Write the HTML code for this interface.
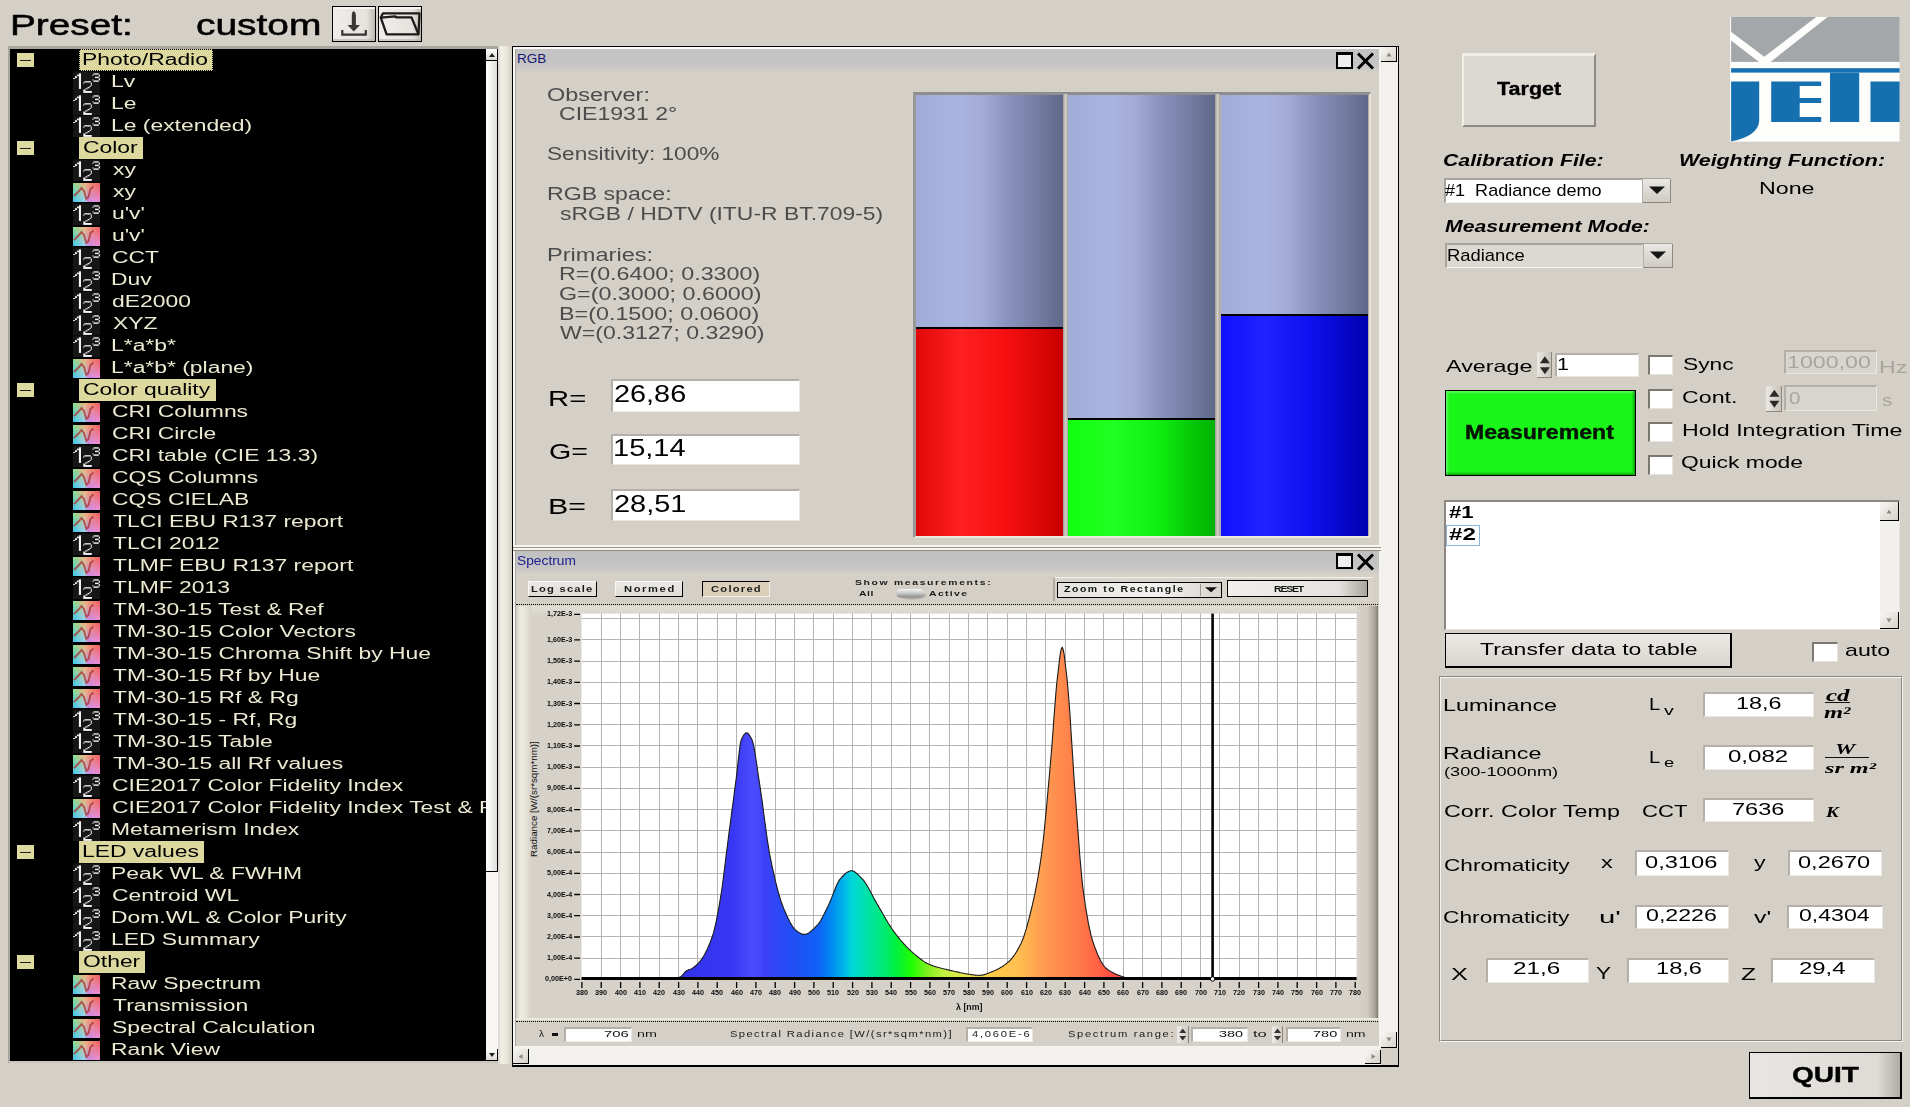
<!DOCTYPE html>
<html><head><meta charset="utf-8"><style>
html,body{margin:0;padding:0;}
body{width:1910px;height:1107px;position:relative;overflow:hidden;background:#d4d0c8;font-family:"Liberation Sans",sans-serif;}
.b{position:absolute;box-sizing:border-box;}
.t{position:absolute;white-space:pre;line-height:1;transform-origin:0 0;font-family:"Liberation Sans",sans-serif;}
.tb{font-weight:bold;}
.tbi{font-weight:bold;font-style:italic;}
.ti{font-style:italic;}
.tsi{font-family:"Liberation Serif",serif;font-style:italic;}
.tsbi{font-family:"Liberation Serif",serif;font-style:italic;font-weight:bold;}
svg{position:absolute;}
</style></head><body>
<div class="t tr" style="left:10.4px;top:10.1px;font-size:30px;transform:scaleX(1.2922);color:#000;-webkit-text-stroke:0.55px #000;">Preset:</div>
<div class="t tr" style="left:196.44px;top:10.1px;font-size:30px;transform:scaleX(1.2970);color:#000;-webkit-text-stroke:0.55px #000;">custom</div>
<div class="b" style="left:332px;top:6px;width:44px;height:36px;border:1px solid #000;background:linear-gradient(90deg,#efedea 0%,#e6e3de 80%,#bdb9b2 100%);"></div>
<div class="b" style="left:333px;top:7px;width:42px;height:2px;background:#f6f5f2;"></div>
<div class="b" style="left:333px;top:39px;width:42px;height:2px;background:#b8b4ac;opacity:.6"></div>
<div class="b" style="left:378px;top:6px;width:43.5px;height:36px;border:1px solid #000;background:linear-gradient(90deg,#efedea 0%,#e6e3de 80%,#bdb9b2 100%);"></div>
<div class="b" style="left:379px;top:7px;width:41.5px;height:2px;background:#f6f5f2;"></div>
<div class="b" style="left:379px;top:39px;width:41.5px;height:2px;background:#b8b4ac;opacity:.6"></div>
<svg style="left:332px;top:6px" width="44" height="36" viewBox="0 0 44 36"><path d="M21.5 5 Q19.8 6 19.8 9 L19.8 19 L15.5 19 L21.8 25.5 L28 19 L23.9 19 L23.9 9 Q23.9 6 21.5 5Z" fill="#3a3636"/><path d="M10.3 24 L10.3 28.7 L33.8 28.7 L33.8 24" fill="none" stroke="#383232" stroke-width="2.2"/></svg>
<svg style="left:378px;top:6px" width="44" height="36" viewBox="0 0 44 36"><path d="M2.8 11.6 L5 7.3 L41.5 7.3 L40.5 28.3 L8.6 28.3 Z" fill="none" stroke="#1e1a1a" stroke-width="2.3" stroke-linejoin="round"/><path d="M2.8 11.6 L17.3 10.4 L18.3 11.4 L33.5 11.4 L40.5 28.3" fill="none" stroke="#1e1a1a" stroke-width="2.3" stroke-linejoin="round"/></svg>
<div class="b" style="left:7.6px;top:46.3px;width:490.7px;height:1016.9px;background:#a8a49e;"></div>
<div class="b" style="left:8.6px;top:1061px;width:489.7px;height:2.2px;background:#c9c5bd;"></div>
<div class="b" style="left:10px;top:49px;width:476px;height:1012px;background:#000;"></div>
<div class="b" style="left:498.3px;top:46px;width:13.2px;height:1017.5px;background:linear-gradient(90deg,#d8d4cc 0%,#f1eee4 25%,#ebe8de 60%,#d6d2ca 100%);"></div>
<div class="b" style="left:486px;top:49px;width:11.6px;height:1012px;background:#f7f6f4;"></div>
<div class="b" style="left:486px;top:49px;width:11.6px;height:11.5px;background:linear-gradient(180deg,#fbfbfa,#dcdad6);border-right:1px solid #000;border-bottom:1px solid #000;"></div>
<svg style="left:487.8px;top:51.75px" width="8" height="6"><path d="M4 1 L7 5 L1 5Z" fill="#222"/></svg>
<div class="b" style="left:486px;top:60.5px;width:11.6px;height:811px;background:linear-gradient(90deg,#ffffff 0%,#f4f4f3 40%,#dedcd9 100%);border-right:1.5px solid #000;border-bottom:1.5px solid #000;"></div>
<div class="b" style="left:486px;top:1049px;width:11.6px;height:12px;background:linear-gradient(180deg,#fbfbfa,#dcdad6);border-right:1px solid #000;border-bottom:1px solid #000;"></div>
<svg style="left:487.8px;top:1052px" width="8" height="6"><path d="M1 1 L7 1 L4 5Z" fill="#222"/></svg>
<div style="position:absolute;left:10px;top:49px;width:476px;height:1012px;overflow:hidden">
<div class="b" style="left:7.1px;top:4px;width:16.9px;height:14px;background:#dedaa0;"></div>
<div class="b" style="left:10.3px;top:10.5px;width:11px;height:1.1px;background:#222;"></div>
<div class="b" style="left:69px;top:0px;width:133.71px;height:22px;background:#dcd89e;outline:1px dotted #000;outline-offset:-1px;"></div>
<div class="t tr" style="left:72.17px;top:3px;font-size:16px;transform:scaleX(1.4300);color:#000;">Photo/Radio</div>
<svg style="left:63px;top:22px" width="28" height="23" viewBox="0 0 28 23"><rect x="0" y="0.5" width="27" height="21.5" fill="#161616"/><g fill="#f4f4f4"><rect x="5.9" y="2.3" width="2.1" height="15.6"/><rect x="0.1" y="7.1" width="1.9" height="0.9"/><rect x="2.0" y="5.2" width="1.9" height="1.9"/><rect x="3.9" y="3.6" width="2.0" height="1.6"/><rect x="10.3" y="11.3" width="1.0" height="1.4"/><rect x="11.3" y="10.2" width="6.5" height="1.3"/><rect x="17.8" y="11.5" width="1.0" height="3.3"/><rect x="16.5" y="14.8" width="1.3" height="1.2"/><rect x="14.5" y="16.0" width="2.0" height="1.3"/><rect x="12.4" y="17.3" width="2.1" height="1.2"/><rect x="10.3" y="18.5" width="2.1" height="1.5"/><rect x="10.3" y="20.0" width="8.5" height="1.9"/><rect x="20.5" y="2.3" width="5.2" height="1.3"/><rect x="19.4" y="3.6" width="1.1" height="1.2"/><rect x="25.7" y="3.6" width="1.2" height="2.1"/><rect x="22.0" y="5.7" width="3.7" height="1.4"/><rect x="25.7" y="7.1" width="1.2" height="2.3"/><rect x="20.5" y="9.4" width="5.2" height="1.4"/><rect x="19.4" y="8.4" width="1.1" height="1.0"/></g></svg>
<div class="t tr" style="left:101.37px;top:25px;font-size:16px;transform:scaleX(1.4300);color:#ecead2;">Lv</div>
<svg style="left:63px;top:44px" width="28" height="23" viewBox="0 0 28 23"><rect x="0" y="0.5" width="27" height="21.5" fill="#161616"/><g fill="#f4f4f4"><rect x="5.9" y="2.3" width="2.1" height="15.6"/><rect x="0.1" y="7.1" width="1.9" height="0.9"/><rect x="2.0" y="5.2" width="1.9" height="1.9"/><rect x="3.9" y="3.6" width="2.0" height="1.6"/><rect x="10.3" y="11.3" width="1.0" height="1.4"/><rect x="11.3" y="10.2" width="6.5" height="1.3"/><rect x="17.8" y="11.5" width="1.0" height="3.3"/><rect x="16.5" y="14.8" width="1.3" height="1.2"/><rect x="14.5" y="16.0" width="2.0" height="1.3"/><rect x="12.4" y="17.3" width="2.1" height="1.2"/><rect x="10.3" y="18.5" width="2.1" height="1.5"/><rect x="10.3" y="20.0" width="8.5" height="1.9"/><rect x="20.5" y="2.3" width="5.2" height="1.3"/><rect x="19.4" y="3.6" width="1.1" height="1.2"/><rect x="25.7" y="3.6" width="1.2" height="2.1"/><rect x="22.0" y="5.7" width="3.7" height="1.4"/><rect x="25.7" y="7.1" width="1.2" height="2.3"/><rect x="20.5" y="9.4" width="5.2" height="1.4"/><rect x="19.4" y="8.4" width="1.1" height="1.0"/></g></svg>
<div class="t tr" style="left:101.37px;top:47px;font-size:16px;transform:scaleX(1.4300);color:#ecead2;">Le</div>
<svg style="left:63px;top:66px" width="28" height="23" viewBox="0 0 28 23"><rect x="0" y="0.5" width="27" height="21.5" fill="#161616"/><g fill="#f4f4f4"><rect x="5.9" y="2.3" width="2.1" height="15.6"/><rect x="0.1" y="7.1" width="1.9" height="0.9"/><rect x="2.0" y="5.2" width="1.9" height="1.9"/><rect x="3.9" y="3.6" width="2.0" height="1.6"/><rect x="10.3" y="11.3" width="1.0" height="1.4"/><rect x="11.3" y="10.2" width="6.5" height="1.3"/><rect x="17.8" y="11.5" width="1.0" height="3.3"/><rect x="16.5" y="14.8" width="1.3" height="1.2"/><rect x="14.5" y="16.0" width="2.0" height="1.3"/><rect x="12.4" y="17.3" width="2.1" height="1.2"/><rect x="10.3" y="18.5" width="2.1" height="1.5"/><rect x="10.3" y="20.0" width="8.5" height="1.9"/><rect x="20.5" y="2.3" width="5.2" height="1.3"/><rect x="19.4" y="3.6" width="1.1" height="1.2"/><rect x="25.7" y="3.6" width="1.2" height="2.1"/><rect x="22.0" y="5.7" width="3.7" height="1.4"/><rect x="25.7" y="7.1" width="1.2" height="2.3"/><rect x="20.5" y="9.4" width="5.2" height="1.4"/><rect x="19.4" y="8.4" width="1.1" height="1.0"/></g></svg>
<div class="t tr" style="left:101.37px;top:69px;font-size:16px;transform:scaleX(1.4300);color:#ecead2;">Le (extended)</div>
<div class="b" style="left:7.1px;top:92px;width:16.9px;height:14px;background:#dedaa0;"></div>
<div class="b" style="left:10.3px;top:98.5px;width:11px;height:1.1px;background:#222;"></div>
<div class="b" style="left:69px;top:88px;width:63.58px;height:22px;background:#dcd89e;"></div>
<div class="t tr" style="left:72.86px;top:91px;font-size:16px;transform:scaleX(1.4300);color:#000;">Color</div>
<svg style="left:63px;top:110px" width="28" height="23" viewBox="0 0 28 23"><rect x="0" y="0.5" width="27" height="21.5" fill="#161616"/><g fill="#f4f4f4"><rect x="5.9" y="2.3" width="2.1" height="15.6"/><rect x="0.1" y="7.1" width="1.9" height="0.9"/><rect x="2.0" y="5.2" width="1.9" height="1.9"/><rect x="3.9" y="3.6" width="2.0" height="1.6"/><rect x="10.3" y="11.3" width="1.0" height="1.4"/><rect x="11.3" y="10.2" width="6.5" height="1.3"/><rect x="17.8" y="11.5" width="1.0" height="3.3"/><rect x="16.5" y="14.8" width="1.3" height="1.2"/><rect x="14.5" y="16.0" width="2.0" height="1.3"/><rect x="12.4" y="17.3" width="2.1" height="1.2"/><rect x="10.3" y="18.5" width="2.1" height="1.5"/><rect x="10.3" y="20.0" width="8.5" height="1.9"/><rect x="20.5" y="2.3" width="5.2" height="1.3"/><rect x="19.4" y="3.6" width="1.1" height="1.2"/><rect x="25.7" y="3.6" width="1.2" height="2.1"/><rect x="22.0" y="5.7" width="3.7" height="1.4"/><rect x="25.7" y="7.1" width="1.2" height="2.3"/><rect x="20.5" y="9.4" width="5.2" height="1.4"/><rect x="19.4" y="8.4" width="1.1" height="1.0"/></g></svg>
<div class="t tr" style="left:102.97px;top:113px;font-size:16px;transform:scaleX(1.4300);color:#ecead2;">xy</div>
<svg style="left:63px;top:134.2px" width="27" height="19" viewBox="0 0 27 19"><defs><linearGradient id="gA" x1="0" y1="0" x2="1" y2="0"><stop offset="0" stop-color="#86e28c"/><stop offset=".45" stop-color="#f1b07a"/><stop offset="1" stop-color="#ec5a58"/></linearGradient><linearGradient id="gB" x1="0" y1="0" x2="1" y2="0"><stop offset="0" stop-color="#3ec4ee"/><stop offset=".45" stop-color="#9ad8f0"/><stop offset=".55" stop-color="#c888e8"/><stop offset="1" stop-color="#f090d8"/></linearGradient><linearGradient id="gV" x1="0" y1="0" x2="0" y2="1"><stop offset="0" stop-color="#fff" stop-opacity="1"/><stop offset="1" stop-color="#000" stop-opacity="1"/></linearGradient><mask id="mV"><rect width="27" height="19" fill="url(#gV)"/></mask></defs><rect width="27" height="19" fill="url(#gB)"/><rect width="27" height="19" fill="url(#gA)" mask="url(#mV)"/><path d="M1 13 L6 8 L8.5 5 L11 8 L13.3 16 L15.5 14 L17.5 6 L20.5 3.5" stroke="#a83030" stroke-width="1.9" fill="none" opacity=".75"/></svg>
<div class="t tr" style="left:102.97px;top:135px;font-size:16px;transform:scaleX(1.4300);color:#ecead2;">xy</div>
<svg style="left:63px;top:154px" width="28" height="23" viewBox="0 0 28 23"><rect x="0" y="0.5" width="27" height="21.5" fill="#161616"/><g fill="#f4f4f4"><rect x="5.9" y="2.3" width="2.1" height="15.6"/><rect x="0.1" y="7.1" width="1.9" height="0.9"/><rect x="2.0" y="5.2" width="1.9" height="1.9"/><rect x="3.9" y="3.6" width="2.0" height="1.6"/><rect x="10.3" y="11.3" width="1.0" height="1.4"/><rect x="11.3" y="10.2" width="6.5" height="1.3"/><rect x="17.8" y="11.5" width="1.0" height="3.3"/><rect x="16.5" y="14.8" width="1.3" height="1.2"/><rect x="14.5" y="16.0" width="2.0" height="1.3"/><rect x="12.4" y="17.3" width="2.1" height="1.2"/><rect x="10.3" y="18.5" width="2.1" height="1.5"/><rect x="10.3" y="20.0" width="8.5" height="1.9"/><rect x="20.5" y="2.3" width="5.2" height="1.3"/><rect x="19.4" y="3.6" width="1.1" height="1.2"/><rect x="25.7" y="3.6" width="1.2" height="2.1"/><rect x="22.0" y="5.7" width="3.7" height="1.4"/><rect x="25.7" y="7.1" width="1.2" height="2.3"/><rect x="20.5" y="9.4" width="5.2" height="1.4"/><rect x="19.4" y="8.4" width="1.1" height="1.0"/></g></svg>
<div class="t tr" style="left:101.71px;top:157px;font-size:16px;transform:scaleX(1.4300);color:#ecead2;">u'v'</div>
<svg style="left:63px;top:178.2px" width="27" height="19" viewBox="0 0 27 19"><defs><linearGradient id="gA" x1="0" y1="0" x2="1" y2="0"><stop offset="0" stop-color="#86e28c"/><stop offset=".45" stop-color="#f1b07a"/><stop offset="1" stop-color="#ec5a58"/></linearGradient><linearGradient id="gB" x1="0" y1="0" x2="1" y2="0"><stop offset="0" stop-color="#3ec4ee"/><stop offset=".45" stop-color="#9ad8f0"/><stop offset=".55" stop-color="#c888e8"/><stop offset="1" stop-color="#f090d8"/></linearGradient><linearGradient id="gV" x1="0" y1="0" x2="0" y2="1"><stop offset="0" stop-color="#fff" stop-opacity="1"/><stop offset="1" stop-color="#000" stop-opacity="1"/></linearGradient><mask id="mV"><rect width="27" height="19" fill="url(#gV)"/></mask></defs><rect width="27" height="19" fill="url(#gB)"/><rect width="27" height="19" fill="url(#gA)" mask="url(#mV)"/><path d="M1 13 L6 8 L8.5 5 L11 8 L13.3 16 L15.5 14 L17.5 6 L20.5 3.5" stroke="#a83030" stroke-width="1.9" fill="none" opacity=".75"/></svg>
<div class="t tr" style="left:101.71px;top:179px;font-size:16px;transform:scaleX(1.4300);color:#ecead2;">u'v'</div>
<svg style="left:63px;top:198px" width="28" height="23" viewBox="0 0 28 23"><rect x="0" y="0.5" width="27" height="21.5" fill="#161616"/><g fill="#f4f4f4"><rect x="5.9" y="2.3" width="2.1" height="15.6"/><rect x="0.1" y="7.1" width="1.9" height="0.9"/><rect x="2.0" y="5.2" width="1.9" height="1.9"/><rect x="3.9" y="3.6" width="2.0" height="1.6"/><rect x="10.3" y="11.3" width="1.0" height="1.4"/><rect x="11.3" y="10.2" width="6.5" height="1.3"/><rect x="17.8" y="11.5" width="1.0" height="3.3"/><rect x="16.5" y="14.8" width="1.3" height="1.2"/><rect x="14.5" y="16.0" width="2.0" height="1.3"/><rect x="12.4" y="17.3" width="2.1" height="1.2"/><rect x="10.3" y="18.5" width="2.1" height="1.5"/><rect x="10.3" y="20.0" width="8.5" height="1.9"/><rect x="20.5" y="2.3" width="5.2" height="1.3"/><rect x="19.4" y="3.6" width="1.1" height="1.2"/><rect x="25.7" y="3.6" width="1.2" height="2.1"/><rect x="22.0" y="5.7" width="3.7" height="1.4"/><rect x="25.7" y="7.1" width="1.2" height="2.3"/><rect x="20.5" y="9.4" width="5.2" height="1.4"/><rect x="19.4" y="8.4" width="1.1" height="1.0"/></g></svg>
<div class="t tr" style="left:102.06px;top:201px;font-size:16px;transform:scaleX(1.4300);color:#ecead2;">CCT</div>
<svg style="left:63px;top:220px" width="28" height="23" viewBox="0 0 28 23"><rect x="0" y="0.5" width="27" height="21.5" fill="#161616"/><g fill="#f4f4f4"><rect x="5.9" y="2.3" width="2.1" height="15.6"/><rect x="0.1" y="7.1" width="1.9" height="0.9"/><rect x="2.0" y="5.2" width="1.9" height="1.9"/><rect x="3.9" y="3.6" width="2.0" height="1.6"/><rect x="10.3" y="11.3" width="1.0" height="1.4"/><rect x="11.3" y="10.2" width="6.5" height="1.3"/><rect x="17.8" y="11.5" width="1.0" height="3.3"/><rect x="16.5" y="14.8" width="1.3" height="1.2"/><rect x="14.5" y="16.0" width="2.0" height="1.3"/><rect x="12.4" y="17.3" width="2.1" height="1.2"/><rect x="10.3" y="18.5" width="2.1" height="1.5"/><rect x="10.3" y="20.0" width="8.5" height="1.9"/><rect x="20.5" y="2.3" width="5.2" height="1.3"/><rect x="19.4" y="3.6" width="1.1" height="1.2"/><rect x="25.7" y="3.6" width="1.2" height="2.1"/><rect x="22.0" y="5.7" width="3.7" height="1.4"/><rect x="25.7" y="7.1" width="1.2" height="2.3"/><rect x="20.5" y="9.4" width="5.2" height="1.4"/><rect x="19.4" y="8.4" width="1.1" height="1.0"/></g></svg>
<div class="t tr" style="left:101.37px;top:223px;font-size:16px;transform:scaleX(1.4300);color:#ecead2;">Duv</div>
<svg style="left:63px;top:242px" width="28" height="23" viewBox="0 0 28 23"><rect x="0" y="0.5" width="27" height="21.5" fill="#161616"/><g fill="#f4f4f4"><rect x="5.9" y="2.3" width="2.1" height="15.6"/><rect x="0.1" y="7.1" width="1.9" height="0.9"/><rect x="2.0" y="5.2" width="1.9" height="1.9"/><rect x="3.9" y="3.6" width="2.0" height="1.6"/><rect x="10.3" y="11.3" width="1.0" height="1.4"/><rect x="11.3" y="10.2" width="6.5" height="1.3"/><rect x="17.8" y="11.5" width="1.0" height="3.3"/><rect x="16.5" y="14.8" width="1.3" height="1.2"/><rect x="14.5" y="16.0" width="2.0" height="1.3"/><rect x="12.4" y="17.3" width="2.1" height="1.2"/><rect x="10.3" y="18.5" width="2.1" height="1.5"/><rect x="10.3" y="20.0" width="8.5" height="1.9"/><rect x="20.5" y="2.3" width="5.2" height="1.3"/><rect x="19.4" y="3.6" width="1.1" height="1.2"/><rect x="25.7" y="3.6" width="1.2" height="2.1"/><rect x="22.0" y="5.7" width="3.7" height="1.4"/><rect x="25.7" y="7.1" width="1.2" height="2.3"/><rect x="20.5" y="9.4" width="5.2" height="1.4"/><rect x="19.4" y="8.4" width="1.1" height="1.0"/></g></svg>
<div class="t tr" style="left:102.28px;top:245px;font-size:16px;transform:scaleX(1.4300);color:#ecead2;">dE2000</div>
<svg style="left:63px;top:264px" width="28" height="23" viewBox="0 0 28 23"><rect x="0" y="0.5" width="27" height="21.5" fill="#161616"/><g fill="#f4f4f4"><rect x="5.9" y="2.3" width="2.1" height="15.6"/><rect x="0.1" y="7.1" width="1.9" height="0.9"/><rect x="2.0" y="5.2" width="1.9" height="1.9"/><rect x="3.9" y="3.6" width="2.0" height="1.6"/><rect x="10.3" y="11.3" width="1.0" height="1.4"/><rect x="11.3" y="10.2" width="6.5" height="1.3"/><rect x="17.8" y="11.5" width="1.0" height="3.3"/><rect x="16.5" y="14.8" width="1.3" height="1.2"/><rect x="14.5" y="16.0" width="2.0" height="1.3"/><rect x="12.4" y="17.3" width="2.1" height="1.2"/><rect x="10.3" y="18.5" width="2.1" height="1.5"/><rect x="10.3" y="20.0" width="8.5" height="1.9"/><rect x="20.5" y="2.3" width="5.2" height="1.3"/><rect x="19.4" y="3.6" width="1.1" height="1.2"/><rect x="25.7" y="3.6" width="1.2" height="2.1"/><rect x="22.0" y="5.7" width="3.7" height="1.4"/><rect x="25.7" y="7.1" width="1.2" height="2.3"/><rect x="20.5" y="9.4" width="5.2" height="1.4"/><rect x="19.4" y="8.4" width="1.1" height="1.0"/></g></svg>
<div class="t tr" style="left:102.63px;top:267px;font-size:16px;transform:scaleX(1.4300);color:#ecead2;">XYZ</div>
<svg style="left:63px;top:286px" width="28" height="23" viewBox="0 0 28 23"><rect x="0" y="0.5" width="27" height="21.5" fill="#161616"/><g fill="#f4f4f4"><rect x="5.9" y="2.3" width="2.1" height="15.6"/><rect x="0.1" y="7.1" width="1.9" height="0.9"/><rect x="2.0" y="5.2" width="1.9" height="1.9"/><rect x="3.9" y="3.6" width="2.0" height="1.6"/><rect x="10.3" y="11.3" width="1.0" height="1.4"/><rect x="11.3" y="10.2" width="6.5" height="1.3"/><rect x="17.8" y="11.5" width="1.0" height="3.3"/><rect x="16.5" y="14.8" width="1.3" height="1.2"/><rect x="14.5" y="16.0" width="2.0" height="1.3"/><rect x="12.4" y="17.3" width="2.1" height="1.2"/><rect x="10.3" y="18.5" width="2.1" height="1.5"/><rect x="10.3" y="20.0" width="8.5" height="1.9"/><rect x="20.5" y="2.3" width="5.2" height="1.3"/><rect x="19.4" y="3.6" width="1.1" height="1.2"/><rect x="25.7" y="3.6" width="1.2" height="2.1"/><rect x="22.0" y="5.7" width="3.7" height="1.4"/><rect x="25.7" y="7.1" width="1.2" height="2.3"/><rect x="20.5" y="9.4" width="5.2" height="1.4"/><rect x="19.4" y="8.4" width="1.1" height="1.0"/></g></svg>
<div class="t tr" style="left:101.37px;top:289px;font-size:16px;transform:scaleX(1.4300);color:#ecead2;">L*a*b*</div>
<svg style="left:63px;top:310.2px" width="27" height="19" viewBox="0 0 27 19"><defs><linearGradient id="gA" x1="0" y1="0" x2="1" y2="0"><stop offset="0" stop-color="#86e28c"/><stop offset=".45" stop-color="#f1b07a"/><stop offset="1" stop-color="#ec5a58"/></linearGradient><linearGradient id="gB" x1="0" y1="0" x2="1" y2="0"><stop offset="0" stop-color="#3ec4ee"/><stop offset=".45" stop-color="#9ad8f0"/><stop offset=".55" stop-color="#c888e8"/><stop offset="1" stop-color="#f090d8"/></linearGradient><linearGradient id="gV" x1="0" y1="0" x2="0" y2="1"><stop offset="0" stop-color="#fff" stop-opacity="1"/><stop offset="1" stop-color="#000" stop-opacity="1"/></linearGradient><mask id="mV"><rect width="27" height="19" fill="url(#gV)"/></mask></defs><rect width="27" height="19" fill="url(#gB)"/><rect width="27" height="19" fill="url(#gA)" mask="url(#mV)"/><path d="M1 13 L6 8 L8.5 5 L11 8 L13.3 16 L15.5 14 L17.5 6 L20.5 3.5" stroke="#a83030" stroke-width="1.9" fill="none" opacity=".75"/></svg>
<div class="t tr" style="left:101.37px;top:311px;font-size:16px;transform:scaleX(1.4300);color:#ecead2;">L*a*b* (plane)</div>
<div class="b" style="left:7.1px;top:334px;width:16.9px;height:14px;background:#dedaa0;"></div>
<div class="b" style="left:10.3px;top:340.5px;width:11px;height:1.1px;background:#222;"></div>
<div class="b" style="left:69px;top:330px;width:136.57px;height:22px;background:#dcd89e;"></div>
<div class="t tr" style="left:72.86px;top:333px;font-size:16px;transform:scaleX(1.4300);color:#000;">Color quality</div>
<svg style="left:63px;top:354.2px" width="27" height="19" viewBox="0 0 27 19"><defs><linearGradient id="gA" x1="0" y1="0" x2="1" y2="0"><stop offset="0" stop-color="#86e28c"/><stop offset=".45" stop-color="#f1b07a"/><stop offset="1" stop-color="#ec5a58"/></linearGradient><linearGradient id="gB" x1="0" y1="0" x2="1" y2="0"><stop offset="0" stop-color="#3ec4ee"/><stop offset=".45" stop-color="#9ad8f0"/><stop offset=".55" stop-color="#c888e8"/><stop offset="1" stop-color="#f090d8"/></linearGradient><linearGradient id="gV" x1="0" y1="0" x2="0" y2="1"><stop offset="0" stop-color="#fff" stop-opacity="1"/><stop offset="1" stop-color="#000" stop-opacity="1"/></linearGradient><mask id="mV"><rect width="27" height="19" fill="url(#gV)"/></mask></defs><rect width="27" height="19" fill="url(#gB)"/><rect width="27" height="19" fill="url(#gA)" mask="url(#mV)"/><path d="M1 13 L6 8 L8.5 5 L11 8 L13.3 16 L15.5 14 L17.5 6 L20.5 3.5" stroke="#a83030" stroke-width="1.9" fill="none" opacity=".75"/></svg>
<div class="t tr" style="left:102.06px;top:355px;font-size:16px;transform:scaleX(1.4300);color:#ecead2;">CRI Columns</div>
<svg style="left:63px;top:376.2px" width="27" height="19" viewBox="0 0 27 19"><defs><linearGradient id="gA" x1="0" y1="0" x2="1" y2="0"><stop offset="0" stop-color="#86e28c"/><stop offset=".45" stop-color="#f1b07a"/><stop offset="1" stop-color="#ec5a58"/></linearGradient><linearGradient id="gB" x1="0" y1="0" x2="1" y2="0"><stop offset="0" stop-color="#3ec4ee"/><stop offset=".45" stop-color="#9ad8f0"/><stop offset=".55" stop-color="#c888e8"/><stop offset="1" stop-color="#f090d8"/></linearGradient><linearGradient id="gV" x1="0" y1="0" x2="0" y2="1"><stop offset="0" stop-color="#fff" stop-opacity="1"/><stop offset="1" stop-color="#000" stop-opacity="1"/></linearGradient><mask id="mV"><rect width="27" height="19" fill="url(#gV)"/></mask></defs><rect width="27" height="19" fill="url(#gB)"/><rect width="27" height="19" fill="url(#gA)" mask="url(#mV)"/><path d="M1 13 L6 8 L8.5 5 L11 8 L13.3 16 L15.5 14 L17.5 6 L20.5 3.5" stroke="#a83030" stroke-width="1.9" fill="none" opacity=".75"/></svg>
<div class="t tr" style="left:102.06px;top:377px;font-size:16px;transform:scaleX(1.4300);color:#ecead2;">CRI Circle</div>
<svg style="left:63px;top:396px" width="28" height="23" viewBox="0 0 28 23"><rect x="0" y="0.5" width="27" height="21.5" fill="#161616"/><g fill="#f4f4f4"><rect x="5.9" y="2.3" width="2.1" height="15.6"/><rect x="0.1" y="7.1" width="1.9" height="0.9"/><rect x="2.0" y="5.2" width="1.9" height="1.9"/><rect x="3.9" y="3.6" width="2.0" height="1.6"/><rect x="10.3" y="11.3" width="1.0" height="1.4"/><rect x="11.3" y="10.2" width="6.5" height="1.3"/><rect x="17.8" y="11.5" width="1.0" height="3.3"/><rect x="16.5" y="14.8" width="1.3" height="1.2"/><rect x="14.5" y="16.0" width="2.0" height="1.3"/><rect x="12.4" y="17.3" width="2.1" height="1.2"/><rect x="10.3" y="18.5" width="2.1" height="1.5"/><rect x="10.3" y="20.0" width="8.5" height="1.9"/><rect x="20.5" y="2.3" width="5.2" height="1.3"/><rect x="19.4" y="3.6" width="1.1" height="1.2"/><rect x="25.7" y="3.6" width="1.2" height="2.1"/><rect x="22.0" y="5.7" width="3.7" height="1.4"/><rect x="25.7" y="7.1" width="1.2" height="2.3"/><rect x="20.5" y="9.4" width="5.2" height="1.4"/><rect x="19.4" y="8.4" width="1.1" height="1.0"/></g></svg>
<div class="t tr" style="left:102.06px;top:399px;font-size:16px;transform:scaleX(1.4300);color:#ecead2;">CRI table (CIE 13.3)</div>
<svg style="left:63px;top:420.2px" width="27" height="19" viewBox="0 0 27 19"><defs><linearGradient id="gA" x1="0" y1="0" x2="1" y2="0"><stop offset="0" stop-color="#86e28c"/><stop offset=".45" stop-color="#f1b07a"/><stop offset="1" stop-color="#ec5a58"/></linearGradient><linearGradient id="gB" x1="0" y1="0" x2="1" y2="0"><stop offset="0" stop-color="#3ec4ee"/><stop offset=".45" stop-color="#9ad8f0"/><stop offset=".55" stop-color="#c888e8"/><stop offset="1" stop-color="#f090d8"/></linearGradient><linearGradient id="gV" x1="0" y1="0" x2="0" y2="1"><stop offset="0" stop-color="#fff" stop-opacity="1"/><stop offset="1" stop-color="#000" stop-opacity="1"/></linearGradient><mask id="mV"><rect width="27" height="19" fill="url(#gV)"/></mask></defs><rect width="27" height="19" fill="url(#gB)"/><rect width="27" height="19" fill="url(#gA)" mask="url(#mV)"/><path d="M1 13 L6 8 L8.5 5 L11 8 L13.3 16 L15.5 14 L17.5 6 L20.5 3.5" stroke="#a83030" stroke-width="1.9" fill="none" opacity=".75"/></svg>
<div class="t tr" style="left:102.06px;top:421px;font-size:16px;transform:scaleX(1.4300);color:#ecead2;">CQS Columns</div>
<svg style="left:63px;top:442.2px" width="27" height="19" viewBox="0 0 27 19"><defs><linearGradient id="gA" x1="0" y1="0" x2="1" y2="0"><stop offset="0" stop-color="#86e28c"/><stop offset=".45" stop-color="#f1b07a"/><stop offset="1" stop-color="#ec5a58"/></linearGradient><linearGradient id="gB" x1="0" y1="0" x2="1" y2="0"><stop offset="0" stop-color="#3ec4ee"/><stop offset=".45" stop-color="#9ad8f0"/><stop offset=".55" stop-color="#c888e8"/><stop offset="1" stop-color="#f090d8"/></linearGradient><linearGradient id="gV" x1="0" y1="0" x2="0" y2="1"><stop offset="0" stop-color="#fff" stop-opacity="1"/><stop offset="1" stop-color="#000" stop-opacity="1"/></linearGradient><mask id="mV"><rect width="27" height="19" fill="url(#gV)"/></mask></defs><rect width="27" height="19" fill="url(#gB)"/><rect width="27" height="19" fill="url(#gA)" mask="url(#mV)"/><path d="M1 13 L6 8 L8.5 5 L11 8 L13.3 16 L15.5 14 L17.5 6 L20.5 3.5" stroke="#a83030" stroke-width="1.9" fill="none" opacity=".75"/></svg>
<div class="t tr" style="left:102.06px;top:443px;font-size:16px;transform:scaleX(1.4300);color:#ecead2;">CQS CIELAB</div>
<svg style="left:63px;top:464.2px" width="27" height="19" viewBox="0 0 27 19"><defs><linearGradient id="gA" x1="0" y1="0" x2="1" y2="0"><stop offset="0" stop-color="#86e28c"/><stop offset=".45" stop-color="#f1b07a"/><stop offset="1" stop-color="#ec5a58"/></linearGradient><linearGradient id="gB" x1="0" y1="0" x2="1" y2="0"><stop offset="0" stop-color="#3ec4ee"/><stop offset=".45" stop-color="#9ad8f0"/><stop offset=".55" stop-color="#c888e8"/><stop offset="1" stop-color="#f090d8"/></linearGradient><linearGradient id="gV" x1="0" y1="0" x2="0" y2="1"><stop offset="0" stop-color="#fff" stop-opacity="1"/><stop offset="1" stop-color="#000" stop-opacity="1"/></linearGradient><mask id="mV"><rect width="27" height="19" fill="url(#gV)"/></mask></defs><rect width="27" height="19" fill="url(#gB)"/><rect width="27" height="19" fill="url(#gA)" mask="url(#mV)"/><path d="M1 13 L6 8 L8.5 5 L11 8 L13.3 16 L15.5 14 L17.5 6 L20.5 3.5" stroke="#a83030" stroke-width="1.9" fill="none" opacity=".75"/></svg>
<div class="t tr" style="left:102.74px;top:465px;font-size:16px;transform:scaleX(1.4300);color:#ecead2;">TLCI EBU R137 report</div>
<svg style="left:63px;top:484px" width="28" height="23" viewBox="0 0 28 23"><rect x="0" y="0.5" width="27" height="21.5" fill="#161616"/><g fill="#f4f4f4"><rect x="5.9" y="2.3" width="2.1" height="15.6"/><rect x="0.1" y="7.1" width="1.9" height="0.9"/><rect x="2.0" y="5.2" width="1.9" height="1.9"/><rect x="3.9" y="3.6" width="2.0" height="1.6"/><rect x="10.3" y="11.3" width="1.0" height="1.4"/><rect x="11.3" y="10.2" width="6.5" height="1.3"/><rect x="17.8" y="11.5" width="1.0" height="3.3"/><rect x="16.5" y="14.8" width="1.3" height="1.2"/><rect x="14.5" y="16.0" width="2.0" height="1.3"/><rect x="12.4" y="17.3" width="2.1" height="1.2"/><rect x="10.3" y="18.5" width="2.1" height="1.5"/><rect x="10.3" y="20.0" width="8.5" height="1.9"/><rect x="20.5" y="2.3" width="5.2" height="1.3"/><rect x="19.4" y="3.6" width="1.1" height="1.2"/><rect x="25.7" y="3.6" width="1.2" height="2.1"/><rect x="22.0" y="5.7" width="3.7" height="1.4"/><rect x="25.7" y="7.1" width="1.2" height="2.3"/><rect x="20.5" y="9.4" width="5.2" height="1.4"/><rect x="19.4" y="8.4" width="1.1" height="1.0"/></g></svg>
<div class="t tr" style="left:102.74px;top:487px;font-size:16px;transform:scaleX(1.4300);color:#ecead2;">TLCI 2012</div>
<svg style="left:63px;top:508.2px" width="27" height="19" viewBox="0 0 27 19"><defs><linearGradient id="gA" x1="0" y1="0" x2="1" y2="0"><stop offset="0" stop-color="#86e28c"/><stop offset=".45" stop-color="#f1b07a"/><stop offset="1" stop-color="#ec5a58"/></linearGradient><linearGradient id="gB" x1="0" y1="0" x2="1" y2="0"><stop offset="0" stop-color="#3ec4ee"/><stop offset=".45" stop-color="#9ad8f0"/><stop offset=".55" stop-color="#c888e8"/><stop offset="1" stop-color="#f090d8"/></linearGradient><linearGradient id="gV" x1="0" y1="0" x2="0" y2="1"><stop offset="0" stop-color="#fff" stop-opacity="1"/><stop offset="1" stop-color="#000" stop-opacity="1"/></linearGradient><mask id="mV"><rect width="27" height="19" fill="url(#gV)"/></mask></defs><rect width="27" height="19" fill="url(#gB)"/><rect width="27" height="19" fill="url(#gA)" mask="url(#mV)"/><path d="M1 13 L6 8 L8.5 5 L11 8 L13.3 16 L15.5 14 L17.5 6 L20.5 3.5" stroke="#a83030" stroke-width="1.9" fill="none" opacity=".75"/></svg>
<div class="t tr" style="left:102.74px;top:509px;font-size:16px;transform:scaleX(1.4300);color:#ecead2;">TLMF EBU R137 report</div>
<svg style="left:63px;top:528px" width="28" height="23" viewBox="0 0 28 23"><rect x="0" y="0.5" width="27" height="21.5" fill="#161616"/><g fill="#f4f4f4"><rect x="5.9" y="2.3" width="2.1" height="15.6"/><rect x="0.1" y="7.1" width="1.9" height="0.9"/><rect x="2.0" y="5.2" width="1.9" height="1.9"/><rect x="3.9" y="3.6" width="2.0" height="1.6"/><rect x="10.3" y="11.3" width="1.0" height="1.4"/><rect x="11.3" y="10.2" width="6.5" height="1.3"/><rect x="17.8" y="11.5" width="1.0" height="3.3"/><rect x="16.5" y="14.8" width="1.3" height="1.2"/><rect x="14.5" y="16.0" width="2.0" height="1.3"/><rect x="12.4" y="17.3" width="2.1" height="1.2"/><rect x="10.3" y="18.5" width="2.1" height="1.5"/><rect x="10.3" y="20.0" width="8.5" height="1.9"/><rect x="20.5" y="2.3" width="5.2" height="1.3"/><rect x="19.4" y="3.6" width="1.1" height="1.2"/><rect x="25.7" y="3.6" width="1.2" height="2.1"/><rect x="22.0" y="5.7" width="3.7" height="1.4"/><rect x="25.7" y="7.1" width="1.2" height="2.3"/><rect x="20.5" y="9.4" width="5.2" height="1.4"/><rect x="19.4" y="8.4" width="1.1" height="1.0"/></g></svg>
<div class="t tr" style="left:102.74px;top:531px;font-size:16px;transform:scaleX(1.4300);color:#ecead2;">TLMF 2013</div>
<svg style="left:63px;top:552.2px" width="27" height="19" viewBox="0 0 27 19"><defs><linearGradient id="gA" x1="0" y1="0" x2="1" y2="0"><stop offset="0" stop-color="#86e28c"/><stop offset=".45" stop-color="#f1b07a"/><stop offset="1" stop-color="#ec5a58"/></linearGradient><linearGradient id="gB" x1="0" y1="0" x2="1" y2="0"><stop offset="0" stop-color="#3ec4ee"/><stop offset=".45" stop-color="#9ad8f0"/><stop offset=".55" stop-color="#c888e8"/><stop offset="1" stop-color="#f090d8"/></linearGradient><linearGradient id="gV" x1="0" y1="0" x2="0" y2="1"><stop offset="0" stop-color="#fff" stop-opacity="1"/><stop offset="1" stop-color="#000" stop-opacity="1"/></linearGradient><mask id="mV"><rect width="27" height="19" fill="url(#gV)"/></mask></defs><rect width="27" height="19" fill="url(#gB)"/><rect width="27" height="19" fill="url(#gA)" mask="url(#mV)"/><path d="M1 13 L6 8 L8.5 5 L11 8 L13.3 16 L15.5 14 L17.5 6 L20.5 3.5" stroke="#a83030" stroke-width="1.9" fill="none" opacity=".75"/></svg>
<div class="t tr" style="left:102.74px;top:553px;font-size:16px;transform:scaleX(1.4300);color:#ecead2;">TM-30-15 Test &amp; Ref</div>
<svg style="left:63px;top:574.2px" width="27" height="19" viewBox="0 0 27 19"><defs><linearGradient id="gA" x1="0" y1="0" x2="1" y2="0"><stop offset="0" stop-color="#86e28c"/><stop offset=".45" stop-color="#f1b07a"/><stop offset="1" stop-color="#ec5a58"/></linearGradient><linearGradient id="gB" x1="0" y1="0" x2="1" y2="0"><stop offset="0" stop-color="#3ec4ee"/><stop offset=".45" stop-color="#9ad8f0"/><stop offset=".55" stop-color="#c888e8"/><stop offset="1" stop-color="#f090d8"/></linearGradient><linearGradient id="gV" x1="0" y1="0" x2="0" y2="1"><stop offset="0" stop-color="#fff" stop-opacity="1"/><stop offset="1" stop-color="#000" stop-opacity="1"/></linearGradient><mask id="mV"><rect width="27" height="19" fill="url(#gV)"/></mask></defs><rect width="27" height="19" fill="url(#gB)"/><rect width="27" height="19" fill="url(#gA)" mask="url(#mV)"/><path d="M1 13 L6 8 L8.5 5 L11 8 L13.3 16 L15.5 14 L17.5 6 L20.5 3.5" stroke="#a83030" stroke-width="1.9" fill="none" opacity=".75"/></svg>
<div class="t tr" style="left:102.74px;top:575px;font-size:16px;transform:scaleX(1.4300);color:#ecead2;">TM-30-15 Color Vectors</div>
<svg style="left:63px;top:596.2px" width="27" height="19" viewBox="0 0 27 19"><defs><linearGradient id="gA" x1="0" y1="0" x2="1" y2="0"><stop offset="0" stop-color="#86e28c"/><stop offset=".45" stop-color="#f1b07a"/><stop offset="1" stop-color="#ec5a58"/></linearGradient><linearGradient id="gB" x1="0" y1="0" x2="1" y2="0"><stop offset="0" stop-color="#3ec4ee"/><stop offset=".45" stop-color="#9ad8f0"/><stop offset=".55" stop-color="#c888e8"/><stop offset="1" stop-color="#f090d8"/></linearGradient><linearGradient id="gV" x1="0" y1="0" x2="0" y2="1"><stop offset="0" stop-color="#fff" stop-opacity="1"/><stop offset="1" stop-color="#000" stop-opacity="1"/></linearGradient><mask id="mV"><rect width="27" height="19" fill="url(#gV)"/></mask></defs><rect width="27" height="19" fill="url(#gB)"/><rect width="27" height="19" fill="url(#gA)" mask="url(#mV)"/><path d="M1 13 L6 8 L8.5 5 L11 8 L13.3 16 L15.5 14 L17.5 6 L20.5 3.5" stroke="#a83030" stroke-width="1.9" fill="none" opacity=".75"/></svg>
<div class="t tr" style="left:102.74px;top:597px;font-size:16px;transform:scaleX(1.4300);color:#ecead2;">TM-30-15 Chroma Shift by Hue</div>
<svg style="left:63px;top:618.2px" width="27" height="19" viewBox="0 0 27 19"><defs><linearGradient id="gA" x1="0" y1="0" x2="1" y2="0"><stop offset="0" stop-color="#86e28c"/><stop offset=".45" stop-color="#f1b07a"/><stop offset="1" stop-color="#ec5a58"/></linearGradient><linearGradient id="gB" x1="0" y1="0" x2="1" y2="0"><stop offset="0" stop-color="#3ec4ee"/><stop offset=".45" stop-color="#9ad8f0"/><stop offset=".55" stop-color="#c888e8"/><stop offset="1" stop-color="#f090d8"/></linearGradient><linearGradient id="gV" x1="0" y1="0" x2="0" y2="1"><stop offset="0" stop-color="#fff" stop-opacity="1"/><stop offset="1" stop-color="#000" stop-opacity="1"/></linearGradient><mask id="mV"><rect width="27" height="19" fill="url(#gV)"/></mask></defs><rect width="27" height="19" fill="url(#gB)"/><rect width="27" height="19" fill="url(#gA)" mask="url(#mV)"/><path d="M1 13 L6 8 L8.5 5 L11 8 L13.3 16 L15.5 14 L17.5 6 L20.5 3.5" stroke="#a83030" stroke-width="1.9" fill="none" opacity=".75"/></svg>
<div class="t tr" style="left:102.74px;top:619px;font-size:16px;transform:scaleX(1.4300);color:#ecead2;">TM-30-15 Rf by Hue</div>
<svg style="left:63px;top:640.2px" width="27" height="19" viewBox="0 0 27 19"><defs><linearGradient id="gA" x1="0" y1="0" x2="1" y2="0"><stop offset="0" stop-color="#86e28c"/><stop offset=".45" stop-color="#f1b07a"/><stop offset="1" stop-color="#ec5a58"/></linearGradient><linearGradient id="gB" x1="0" y1="0" x2="1" y2="0"><stop offset="0" stop-color="#3ec4ee"/><stop offset=".45" stop-color="#9ad8f0"/><stop offset=".55" stop-color="#c888e8"/><stop offset="1" stop-color="#f090d8"/></linearGradient><linearGradient id="gV" x1="0" y1="0" x2="0" y2="1"><stop offset="0" stop-color="#fff" stop-opacity="1"/><stop offset="1" stop-color="#000" stop-opacity="1"/></linearGradient><mask id="mV"><rect width="27" height="19" fill="url(#gV)"/></mask></defs><rect width="27" height="19" fill="url(#gB)"/><rect width="27" height="19" fill="url(#gA)" mask="url(#mV)"/><path d="M1 13 L6 8 L8.5 5 L11 8 L13.3 16 L15.5 14 L17.5 6 L20.5 3.5" stroke="#a83030" stroke-width="1.9" fill="none" opacity=".75"/></svg>
<div class="t tr" style="left:102.74px;top:641px;font-size:16px;transform:scaleX(1.4300);color:#ecead2;">TM-30-15 Rf &amp; Rg</div>
<svg style="left:63px;top:660px" width="28" height="23" viewBox="0 0 28 23"><rect x="0" y="0.5" width="27" height="21.5" fill="#161616"/><g fill="#f4f4f4"><rect x="5.9" y="2.3" width="2.1" height="15.6"/><rect x="0.1" y="7.1" width="1.9" height="0.9"/><rect x="2.0" y="5.2" width="1.9" height="1.9"/><rect x="3.9" y="3.6" width="2.0" height="1.6"/><rect x="10.3" y="11.3" width="1.0" height="1.4"/><rect x="11.3" y="10.2" width="6.5" height="1.3"/><rect x="17.8" y="11.5" width="1.0" height="3.3"/><rect x="16.5" y="14.8" width="1.3" height="1.2"/><rect x="14.5" y="16.0" width="2.0" height="1.3"/><rect x="12.4" y="17.3" width="2.1" height="1.2"/><rect x="10.3" y="18.5" width="2.1" height="1.5"/><rect x="10.3" y="20.0" width="8.5" height="1.9"/><rect x="20.5" y="2.3" width="5.2" height="1.3"/><rect x="19.4" y="3.6" width="1.1" height="1.2"/><rect x="25.7" y="3.6" width="1.2" height="2.1"/><rect x="22.0" y="5.7" width="3.7" height="1.4"/><rect x="25.7" y="7.1" width="1.2" height="2.3"/><rect x="20.5" y="9.4" width="5.2" height="1.4"/><rect x="19.4" y="8.4" width="1.1" height="1.0"/></g></svg>
<div class="t tr" style="left:102.74px;top:663px;font-size:16px;transform:scaleX(1.4300);color:#ecead2;">TM-30-15 - Rf, Rg</div>
<svg style="left:63px;top:682px" width="28" height="23" viewBox="0 0 28 23"><rect x="0" y="0.5" width="27" height="21.5" fill="#161616"/><g fill="#f4f4f4"><rect x="5.9" y="2.3" width="2.1" height="15.6"/><rect x="0.1" y="7.1" width="1.9" height="0.9"/><rect x="2.0" y="5.2" width="1.9" height="1.9"/><rect x="3.9" y="3.6" width="2.0" height="1.6"/><rect x="10.3" y="11.3" width="1.0" height="1.4"/><rect x="11.3" y="10.2" width="6.5" height="1.3"/><rect x="17.8" y="11.5" width="1.0" height="3.3"/><rect x="16.5" y="14.8" width="1.3" height="1.2"/><rect x="14.5" y="16.0" width="2.0" height="1.3"/><rect x="12.4" y="17.3" width="2.1" height="1.2"/><rect x="10.3" y="18.5" width="2.1" height="1.5"/><rect x="10.3" y="20.0" width="8.5" height="1.9"/><rect x="20.5" y="2.3" width="5.2" height="1.3"/><rect x="19.4" y="3.6" width="1.1" height="1.2"/><rect x="25.7" y="3.6" width="1.2" height="2.1"/><rect x="22.0" y="5.7" width="3.7" height="1.4"/><rect x="25.7" y="7.1" width="1.2" height="2.3"/><rect x="20.5" y="9.4" width="5.2" height="1.4"/><rect x="19.4" y="8.4" width="1.1" height="1.0"/></g></svg>
<div class="t tr" style="left:102.74px;top:685px;font-size:16px;transform:scaleX(1.4300);color:#ecead2;">TM-30-15 Table</div>
<svg style="left:63px;top:706.2px" width="27" height="19" viewBox="0 0 27 19"><defs><linearGradient id="gA" x1="0" y1="0" x2="1" y2="0"><stop offset="0" stop-color="#86e28c"/><stop offset=".45" stop-color="#f1b07a"/><stop offset="1" stop-color="#ec5a58"/></linearGradient><linearGradient id="gB" x1="0" y1="0" x2="1" y2="0"><stop offset="0" stop-color="#3ec4ee"/><stop offset=".45" stop-color="#9ad8f0"/><stop offset=".55" stop-color="#c888e8"/><stop offset="1" stop-color="#f090d8"/></linearGradient><linearGradient id="gV" x1="0" y1="0" x2="0" y2="1"><stop offset="0" stop-color="#fff" stop-opacity="1"/><stop offset="1" stop-color="#000" stop-opacity="1"/></linearGradient><mask id="mV"><rect width="27" height="19" fill="url(#gV)"/></mask></defs><rect width="27" height="19" fill="url(#gB)"/><rect width="27" height="19" fill="url(#gA)" mask="url(#mV)"/><path d="M1 13 L6 8 L8.5 5 L11 8 L13.3 16 L15.5 14 L17.5 6 L20.5 3.5" stroke="#a83030" stroke-width="1.9" fill="none" opacity=".75"/></svg>
<div class="t tr" style="left:102.74px;top:707px;font-size:16px;transform:scaleX(1.4300);color:#ecead2;">TM-30-15 all Rf values</div>
<svg style="left:63px;top:726px" width="28" height="23" viewBox="0 0 28 23"><rect x="0" y="0.5" width="27" height="21.5" fill="#161616"/><g fill="#f4f4f4"><rect x="5.9" y="2.3" width="2.1" height="15.6"/><rect x="0.1" y="7.1" width="1.9" height="0.9"/><rect x="2.0" y="5.2" width="1.9" height="1.9"/><rect x="3.9" y="3.6" width="2.0" height="1.6"/><rect x="10.3" y="11.3" width="1.0" height="1.4"/><rect x="11.3" y="10.2" width="6.5" height="1.3"/><rect x="17.8" y="11.5" width="1.0" height="3.3"/><rect x="16.5" y="14.8" width="1.3" height="1.2"/><rect x="14.5" y="16.0" width="2.0" height="1.3"/><rect x="12.4" y="17.3" width="2.1" height="1.2"/><rect x="10.3" y="18.5" width="2.1" height="1.5"/><rect x="10.3" y="20.0" width="8.5" height="1.9"/><rect x="20.5" y="2.3" width="5.2" height="1.3"/><rect x="19.4" y="3.6" width="1.1" height="1.2"/><rect x="25.7" y="3.6" width="1.2" height="2.1"/><rect x="22.0" y="5.7" width="3.7" height="1.4"/><rect x="25.7" y="7.1" width="1.2" height="2.3"/><rect x="20.5" y="9.4" width="5.2" height="1.4"/><rect x="19.4" y="8.4" width="1.1" height="1.0"/></g></svg>
<div class="t tr" style="left:102.06px;top:729px;font-size:16px;transform:scaleX(1.4300);color:#ecead2;">CIE2017 Color Fidelity Index</div>
<svg style="left:63px;top:750.2px" width="27" height="19" viewBox="0 0 27 19"><defs><linearGradient id="gA" x1="0" y1="0" x2="1" y2="0"><stop offset="0" stop-color="#86e28c"/><stop offset=".45" stop-color="#f1b07a"/><stop offset="1" stop-color="#ec5a58"/></linearGradient><linearGradient id="gB" x1="0" y1="0" x2="1" y2="0"><stop offset="0" stop-color="#3ec4ee"/><stop offset=".45" stop-color="#9ad8f0"/><stop offset=".55" stop-color="#c888e8"/><stop offset="1" stop-color="#f090d8"/></linearGradient><linearGradient id="gV" x1="0" y1="0" x2="0" y2="1"><stop offset="0" stop-color="#fff" stop-opacity="1"/><stop offset="1" stop-color="#000" stop-opacity="1"/></linearGradient><mask id="mV"><rect width="27" height="19" fill="url(#gV)"/></mask></defs><rect width="27" height="19" fill="url(#gB)"/><rect width="27" height="19" fill="url(#gA)" mask="url(#mV)"/><path d="M1 13 L6 8 L8.5 5 L11 8 L13.3 16 L15.5 14 L17.5 6 L20.5 3.5" stroke="#a83030" stroke-width="1.9" fill="none" opacity=".75"/></svg>
<div class="t tr" style="left:102.06px;top:751px;font-size:16px;transform:scaleX(1.4300);color:#ecead2;">CIE2017 Color Fidelity Index Test &amp; Ref</div>
<svg style="left:63px;top:770px" width="28" height="23" viewBox="0 0 28 23"><rect x="0" y="0.5" width="27" height="21.5" fill="#161616"/><g fill="#f4f4f4"><rect x="5.9" y="2.3" width="2.1" height="15.6"/><rect x="0.1" y="7.1" width="1.9" height="0.9"/><rect x="2.0" y="5.2" width="1.9" height="1.9"/><rect x="3.9" y="3.6" width="2.0" height="1.6"/><rect x="10.3" y="11.3" width="1.0" height="1.4"/><rect x="11.3" y="10.2" width="6.5" height="1.3"/><rect x="17.8" y="11.5" width="1.0" height="3.3"/><rect x="16.5" y="14.8" width="1.3" height="1.2"/><rect x="14.5" y="16.0" width="2.0" height="1.3"/><rect x="12.4" y="17.3" width="2.1" height="1.2"/><rect x="10.3" y="18.5" width="2.1" height="1.5"/><rect x="10.3" y="20.0" width="8.5" height="1.9"/><rect x="20.5" y="2.3" width="5.2" height="1.3"/><rect x="19.4" y="3.6" width="1.1" height="1.2"/><rect x="25.7" y="3.6" width="1.2" height="2.1"/><rect x="22.0" y="5.7" width="3.7" height="1.4"/><rect x="25.7" y="7.1" width="1.2" height="2.3"/><rect x="20.5" y="9.4" width="5.2" height="1.4"/><rect x="19.4" y="8.4" width="1.1" height="1.0"/></g></svg>
<div class="t tr" style="left:101.37px;top:773px;font-size:16px;transform:scaleX(1.4300);color:#ecead2;">Metamerism Index</div>
<div class="b" style="left:7.1px;top:796px;width:16.9px;height:14px;background:#dedaa0;"></div>
<div class="b" style="left:10.3px;top:802.5px;width:11px;height:1.1px;background:#222;"></div>
<div class="b" style="left:69px;top:792px;width:124.9px;height:22px;background:#dcd89e;"></div>
<div class="t tr" style="left:72.17px;top:795px;font-size:16px;transform:scaleX(1.4300);color:#000;">LED values</div>
<svg style="left:63px;top:814px" width="28" height="23" viewBox="0 0 28 23"><rect x="0" y="0.5" width="27" height="21.5" fill="#161616"/><g fill="#f4f4f4"><rect x="5.9" y="2.3" width="2.1" height="15.6"/><rect x="0.1" y="7.1" width="1.9" height="0.9"/><rect x="2.0" y="5.2" width="1.9" height="1.9"/><rect x="3.9" y="3.6" width="2.0" height="1.6"/><rect x="10.3" y="11.3" width="1.0" height="1.4"/><rect x="11.3" y="10.2" width="6.5" height="1.3"/><rect x="17.8" y="11.5" width="1.0" height="3.3"/><rect x="16.5" y="14.8" width="1.3" height="1.2"/><rect x="14.5" y="16.0" width="2.0" height="1.3"/><rect x="12.4" y="17.3" width="2.1" height="1.2"/><rect x="10.3" y="18.5" width="2.1" height="1.5"/><rect x="10.3" y="20.0" width="8.5" height="1.9"/><rect x="20.5" y="2.3" width="5.2" height="1.3"/><rect x="19.4" y="3.6" width="1.1" height="1.2"/><rect x="25.7" y="3.6" width="1.2" height="2.1"/><rect x="22.0" y="5.7" width="3.7" height="1.4"/><rect x="25.7" y="7.1" width="1.2" height="2.3"/><rect x="20.5" y="9.4" width="5.2" height="1.4"/><rect x="19.4" y="8.4" width="1.1" height="1.0"/></g></svg>
<div class="t tr" style="left:101.37px;top:817px;font-size:16px;transform:scaleX(1.4300);color:#ecead2;">Peak WL &amp; FWHM</div>
<svg style="left:63px;top:836px" width="28" height="23" viewBox="0 0 28 23"><rect x="0" y="0.5" width="27" height="21.5" fill="#161616"/><g fill="#f4f4f4"><rect x="5.9" y="2.3" width="2.1" height="15.6"/><rect x="0.1" y="7.1" width="1.9" height="0.9"/><rect x="2.0" y="5.2" width="1.9" height="1.9"/><rect x="3.9" y="3.6" width="2.0" height="1.6"/><rect x="10.3" y="11.3" width="1.0" height="1.4"/><rect x="11.3" y="10.2" width="6.5" height="1.3"/><rect x="17.8" y="11.5" width="1.0" height="3.3"/><rect x="16.5" y="14.8" width="1.3" height="1.2"/><rect x="14.5" y="16.0" width="2.0" height="1.3"/><rect x="12.4" y="17.3" width="2.1" height="1.2"/><rect x="10.3" y="18.5" width="2.1" height="1.5"/><rect x="10.3" y="20.0" width="8.5" height="1.9"/><rect x="20.5" y="2.3" width="5.2" height="1.3"/><rect x="19.4" y="3.6" width="1.1" height="1.2"/><rect x="25.7" y="3.6" width="1.2" height="2.1"/><rect x="22.0" y="5.7" width="3.7" height="1.4"/><rect x="25.7" y="7.1" width="1.2" height="2.3"/><rect x="20.5" y="9.4" width="5.2" height="1.4"/><rect x="19.4" y="8.4" width="1.1" height="1.0"/></g></svg>
<div class="t tr" style="left:102.06px;top:839px;font-size:16px;transform:scaleX(1.4300);color:#ecead2;">Centroid WL</div>
<svg style="left:63px;top:858px" width="28" height="23" viewBox="0 0 28 23"><rect x="0" y="0.5" width="27" height="21.5" fill="#161616"/><g fill="#f4f4f4"><rect x="5.9" y="2.3" width="2.1" height="15.6"/><rect x="0.1" y="7.1" width="1.9" height="0.9"/><rect x="2.0" y="5.2" width="1.9" height="1.9"/><rect x="3.9" y="3.6" width="2.0" height="1.6"/><rect x="10.3" y="11.3" width="1.0" height="1.4"/><rect x="11.3" y="10.2" width="6.5" height="1.3"/><rect x="17.8" y="11.5" width="1.0" height="3.3"/><rect x="16.5" y="14.8" width="1.3" height="1.2"/><rect x="14.5" y="16.0" width="2.0" height="1.3"/><rect x="12.4" y="17.3" width="2.1" height="1.2"/><rect x="10.3" y="18.5" width="2.1" height="1.5"/><rect x="10.3" y="20.0" width="8.5" height="1.9"/><rect x="20.5" y="2.3" width="5.2" height="1.3"/><rect x="19.4" y="3.6" width="1.1" height="1.2"/><rect x="25.7" y="3.6" width="1.2" height="2.1"/><rect x="22.0" y="5.7" width="3.7" height="1.4"/><rect x="25.7" y="7.1" width="1.2" height="2.3"/><rect x="20.5" y="9.4" width="5.2" height="1.4"/><rect x="19.4" y="8.4" width="1.1" height="1.0"/></g></svg>
<div class="t tr" style="left:101.37px;top:861px;font-size:16px;transform:scaleX(1.4300);color:#ecead2;">Dom.WL &amp; Color Purity</div>
<svg style="left:63px;top:880px" width="28" height="23" viewBox="0 0 28 23"><rect x="0" y="0.5" width="27" height="21.5" fill="#161616"/><g fill="#f4f4f4"><rect x="5.9" y="2.3" width="2.1" height="15.6"/><rect x="0.1" y="7.1" width="1.9" height="0.9"/><rect x="2.0" y="5.2" width="1.9" height="1.9"/><rect x="3.9" y="3.6" width="2.0" height="1.6"/><rect x="10.3" y="11.3" width="1.0" height="1.4"/><rect x="11.3" y="10.2" width="6.5" height="1.3"/><rect x="17.8" y="11.5" width="1.0" height="3.3"/><rect x="16.5" y="14.8" width="1.3" height="1.2"/><rect x="14.5" y="16.0" width="2.0" height="1.3"/><rect x="12.4" y="17.3" width="2.1" height="1.2"/><rect x="10.3" y="18.5" width="2.1" height="1.5"/><rect x="10.3" y="20.0" width="8.5" height="1.9"/><rect x="20.5" y="2.3" width="5.2" height="1.3"/><rect x="19.4" y="3.6" width="1.1" height="1.2"/><rect x="25.7" y="3.6" width="1.2" height="2.1"/><rect x="22.0" y="5.7" width="3.7" height="1.4"/><rect x="25.7" y="7.1" width="1.2" height="2.3"/><rect x="20.5" y="9.4" width="5.2" height="1.4"/><rect x="19.4" y="8.4" width="1.1" height="1.0"/></g></svg>
<div class="t tr" style="left:101.37px;top:883px;font-size:16px;transform:scaleX(1.4300);color:#ecead2;">LED Summary</div>
<div class="b" style="left:7.1px;top:906px;width:16.9px;height:14px;background:#dedaa0;"></div>
<div class="b" style="left:10.3px;top:912.5px;width:11px;height:1.1px;background:#222;"></div>
<div class="b" style="left:69px;top:902px;width:66.33px;height:22px;background:#dcd89e;"></div>
<div class="t tr" style="left:72.97px;top:905px;font-size:16px;transform:scaleX(1.4300);color:#000;">Other</div>
<svg style="left:63px;top:926.2px" width="27" height="19" viewBox="0 0 27 19"><defs><linearGradient id="gA" x1="0" y1="0" x2="1" y2="0"><stop offset="0" stop-color="#86e28c"/><stop offset=".45" stop-color="#f1b07a"/><stop offset="1" stop-color="#ec5a58"/></linearGradient><linearGradient id="gB" x1="0" y1="0" x2="1" y2="0"><stop offset="0" stop-color="#3ec4ee"/><stop offset=".45" stop-color="#9ad8f0"/><stop offset=".55" stop-color="#c888e8"/><stop offset="1" stop-color="#f090d8"/></linearGradient><linearGradient id="gV" x1="0" y1="0" x2="0" y2="1"><stop offset="0" stop-color="#fff" stop-opacity="1"/><stop offset="1" stop-color="#000" stop-opacity="1"/></linearGradient><mask id="mV"><rect width="27" height="19" fill="url(#gV)"/></mask></defs><rect width="27" height="19" fill="url(#gB)"/><rect width="27" height="19" fill="url(#gA)" mask="url(#mV)"/><path d="M1 13 L6 8 L8.5 5 L11 8 L13.3 16 L15.5 14 L17.5 6 L20.5 3.5" stroke="#a83030" stroke-width="1.9" fill="none" opacity=".75"/></svg>
<div class="t tr" style="left:101.37px;top:927px;font-size:16px;transform:scaleX(1.4300);color:#ecead2;">Raw Spectrum</div>
<svg style="left:63px;top:948.2px" width="27" height="19" viewBox="0 0 27 19"><defs><linearGradient id="gA" x1="0" y1="0" x2="1" y2="0"><stop offset="0" stop-color="#86e28c"/><stop offset=".45" stop-color="#f1b07a"/><stop offset="1" stop-color="#ec5a58"/></linearGradient><linearGradient id="gB" x1="0" y1="0" x2="1" y2="0"><stop offset="0" stop-color="#3ec4ee"/><stop offset=".45" stop-color="#9ad8f0"/><stop offset=".55" stop-color="#c888e8"/><stop offset="1" stop-color="#f090d8"/></linearGradient><linearGradient id="gV" x1="0" y1="0" x2="0" y2="1"><stop offset="0" stop-color="#fff" stop-opacity="1"/><stop offset="1" stop-color="#000" stop-opacity="1"/></linearGradient><mask id="mV"><rect width="27" height="19" fill="url(#gV)"/></mask></defs><rect width="27" height="19" fill="url(#gB)"/><rect width="27" height="19" fill="url(#gA)" mask="url(#mV)"/><path d="M1 13 L6 8 L8.5 5 L11 8 L13.3 16 L15.5 14 L17.5 6 L20.5 3.5" stroke="#a83030" stroke-width="1.9" fill="none" opacity=".75"/></svg>
<div class="t tr" style="left:102.74px;top:949px;font-size:16px;transform:scaleX(1.4300);color:#ecead2;">Transmission</div>
<svg style="left:63px;top:970.2px" width="27" height="19" viewBox="0 0 27 19"><defs><linearGradient id="gA" x1="0" y1="0" x2="1" y2="0"><stop offset="0" stop-color="#86e28c"/><stop offset=".45" stop-color="#f1b07a"/><stop offset="1" stop-color="#ec5a58"/></linearGradient><linearGradient id="gB" x1="0" y1="0" x2="1" y2="0"><stop offset="0" stop-color="#3ec4ee"/><stop offset=".45" stop-color="#9ad8f0"/><stop offset=".55" stop-color="#c888e8"/><stop offset="1" stop-color="#f090d8"/></linearGradient><linearGradient id="gV" x1="0" y1="0" x2="0" y2="1"><stop offset="0" stop-color="#fff" stop-opacity="1"/><stop offset="1" stop-color="#000" stop-opacity="1"/></linearGradient><mask id="mV"><rect width="27" height="19" fill="url(#gV)"/></mask></defs><rect width="27" height="19" fill="url(#gB)"/><rect width="27" height="19" fill="url(#gA)" mask="url(#mV)"/><path d="M1 13 L6 8 L8.5 5 L11 8 L13.3 16 L15.5 14 L17.5 6 L20.5 3.5" stroke="#a83030" stroke-width="1.9" fill="none" opacity=".75"/></svg>
<div class="t tr" style="left:102.17px;top:971px;font-size:16px;transform:scaleX(1.4300);color:#ecead2;">Spectral Calculation</div>
<svg style="left:63px;top:992.2px" width="27" height="19" viewBox="0 0 27 19"><defs><linearGradient id="gA" x1="0" y1="0" x2="1" y2="0"><stop offset="0" stop-color="#86e28c"/><stop offset=".45" stop-color="#f1b07a"/><stop offset="1" stop-color="#ec5a58"/></linearGradient><linearGradient id="gB" x1="0" y1="0" x2="1" y2="0"><stop offset="0" stop-color="#3ec4ee"/><stop offset=".45" stop-color="#9ad8f0"/><stop offset=".55" stop-color="#c888e8"/><stop offset="1" stop-color="#f090d8"/></linearGradient><linearGradient id="gV" x1="0" y1="0" x2="0" y2="1"><stop offset="0" stop-color="#fff" stop-opacity="1"/><stop offset="1" stop-color="#000" stop-opacity="1"/></linearGradient><mask id="mV"><rect width="27" height="19" fill="url(#gV)"/></mask></defs><rect width="27" height="19" fill="url(#gB)"/><rect width="27" height="19" fill="url(#gA)" mask="url(#mV)"/><path d="M1 13 L6 8 L8.5 5 L11 8 L13.3 16 L15.5 14 L17.5 6 L20.5 3.5" stroke="#a83030" stroke-width="1.9" fill="none" opacity=".75"/></svg>
<div class="t tr" style="left:101.37px;top:993px;font-size:16px;transform:scaleX(1.4300);color:#ecead2;">Rank View</div>
</div>
<div class="b" style="left:512px;top:46px;width:887px;height:1020.5px;border:1px solid #000;background:#d4d0c8;"></div>
<div class="b" style="left:513px;top:47px;width:867.5px;height:2px;background:#fbfaf6;"></div>
<div class="b" style="left:513px;top:47px;width:2px;height:499px;background:#fbfaf6;"></div>
<div class="b" style="left:515px;top:49px;width:1px;height:497px;background:#aaa69e;"></div>
<div class="b" style="left:1378.5px;top:47px;width:2px;height:499px;background:#f4f2ec;"></div>
<div class="b" style="left:516px;top:49px;width:862.5px;height:21.5px;background:linear-gradient(180deg,#c3c3c4 0%,#c5c5c5 70%,#cfcdc8 100%);"></div>
<div class="t tr" style="left:516.92px;top:52.23px;font-size:13.5px;transform:scaleX(1.0000);color:#14146e;">RGB</div>
<div class="b" style="left:1336px;top:52px;width:16.5px;height:16.7px;background:#efefef;border:2px solid #000;border-top-width:3.5px;"></div>
<svg style="left:1356px;top:52px" width="19" height="18" viewBox="0 0 19 18"><path d="M2 1.5 L17 16.5 M17 1.5 L2 16.5" stroke="#000" stroke-width="3"/></svg>
<div class="b" style="left:513px;top:545.2px;width:867.5px;height:2.1px;background:#f6f4ee;"></div>
<div class="b" style="left:513px;top:547.3px;width:867.5px;height:0.9px;background:#9c988f;"></div>
<div class="b" style="left:513px;top:548.2px;width:867.5px;height:2px;background:#f6f4ee;"></div>
<div class="b" style="left:513px;top:550.2px;width:867.5px;height:1px;background:#8f8b84;"></div>
<div class="t tr" style="left:547.35px;top:86.62px;font-size:17.5px;transform:scaleX(1.3392);color:#4c4c4c;">Observer:</div>
<div class="t tr" style="left:559.45px;top:106.42px;font-size:17.5px;transform:scaleX(1.3183);color:#4c4c4c;">CIE1931 2°</div>
<div class="t tr" style="left:547.38px;top:146.22px;font-size:17.5px;transform:scaleX(1.2938);color:#4c4c4c;">Sensitivity: 100%</div>
<div class="t tr" style="left:546.55px;top:186.32px;font-size:17.5px;transform:scaleX(1.3202);color:#4c4c4c;">RGB space:</div>
<div class="t tr" style="left:559.91px;top:206.12px;font-size:17.5px;transform:scaleX(1.3087);color:#4c4c4c;">sRGB / HDTV (ITU-R BT.709-5)</div>
<div class="t tr" style="left:546.51px;top:246.52px;font-size:17.5px;transform:scaleX(1.3474);color:#4c4c4c;">Primaries:</div>
<div class="t tr" style="left:558.74px;top:266.32px;font-size:17.5px;transform:scaleX(1.3297);color:#4c4c4c;">R=(0.6400; 0.3300)</div>
<div class="t tr" style="left:559.44px;top:286.02px;font-size:17.5px;transform:scaleX(1.3298);color:#4c4c4c;">G=(0.3000; 0.6000)</div>
<div class="t tr" style="left:558.73px;top:305.73px;font-size:17.5px;transform:scaleX(1.3323);color:#4c4c4c;">B=(0.1500; 0.0600)</div>
<div class="t tr" style="left:560.48px;top:325.43px;font-size:17.5px;transform:scaleX(1.3175);color:#4c4c4c;">W=(0.3127; 0.3290)</div>
<div class="t tr" style="left:547.66px;top:387.5px;font-size:22px;transform:scaleX(1.3308);color:#000;">R=</div>
<div class="b" style="left:611.3px;top:379.2px;width:188.7px;height:33px;background:#fff;border-top:2px solid #b4b0a8;border-left:2px solid #b4b0a8;border-right:1px solid #ebe8e2;border-bottom:1px solid #ebe8e2;"></div>
<div class="t tr" style="left:613.56px;top:383.22px;font-size:23.5px;transform:scaleX(1.2272);color:#000;">26,86</div>
<div class="t tr" style="left:548.57px;top:440.7px;font-size:22px;transform:scaleX(1.3008);color:#000;">G=</div>
<div class="b" style="left:611.3px;top:433.7px;width:188.7px;height:31.6px;background:#fff;border-top:2px solid #b4b0a8;border-left:2px solid #b4b0a8;border-right:1px solid #ebe8e2;border-bottom:1px solid #ebe8e2;"></div>
<div class="t tr" style="left:612.82px;top:437.22px;font-size:23.5px;transform:scaleX(1.2348);color:#000;">15,14</div>
<div class="t tr" style="left:547.57px;top:496.4px;font-size:22px;transform:scaleX(1.3799);color:#000;">B=</div>
<div class="b" style="left:611.3px;top:488.9px;width:188.7px;height:32.1px;background:#fff;border-top:2px solid #b4b0a8;border-left:2px solid #b4b0a8;border-right:1px solid #ebe8e2;border-bottom:1px solid #ebe8e2;"></div>
<div class="t tr" style="left:613.56px;top:492.73px;font-size:23.5px;transform:scaleX(1.2297);color:#000;">28,51</div>
<div class="b" style="left:912.5px;top:91.8px;width:458px;height:446.2px;background:#b4b0a8;border-top:3px solid #8e8d8f;border-left:3px solid #9a9894;border-right:2px solid #e6e2da;border-bottom:2px solid #ece9e2;"></div>
<div class="b" style="left:915.8px;top:95px;width:147.2px;height:441px;background:linear-gradient(90deg,#a1acd8 0%,#a9b4e0 30%,#a3acd6 45%,#8790ba 65%,#727a9e 85%,#60688a 100%);"></div>
<div class="b" style="left:915.8px;top:327.2px;width:147.2px;height:2px;background:#000;"></div>
<div class="b" style="left:915.8px;top:329.2px;width:147.2px;height:206.8px;background:linear-gradient(90deg,#e00808 0%,#ff2020 30%,#f81010 60%,#c80000 100%);"></div>
<div class="b" style="left:1067.8px;top:95px;width:147.2px;height:441px;background:linear-gradient(90deg,#a1acd8 0%,#a9b4e0 30%,#a3acd6 45%,#8790ba 65%,#727a9e 85%,#60688a 100%);"></div>
<div class="b" style="left:1067.8px;top:417.8px;width:147.2px;height:2px;background:#000;"></div>
<div class="b" style="left:1067.8px;top:419.8px;width:147.2px;height:116.2px;background:linear-gradient(90deg,#10ff10 0%,#22ff22 30%,#10f010 60%,#00b000 100%);"></div>
<div class="b" style="left:1220.5px;top:95px;width:147.5px;height:441px;background:linear-gradient(90deg,#a1acd8 0%,#a9b4e0 30%,#a3acd6 45%,#8790ba 65%,#727a9e 85%,#60688a 100%);"></div>
<div class="b" style="left:1220.5px;top:313.8px;width:147.5px;height:2px;background:#000;"></div>
<div class="b" style="left:1220.5px;top:315.8px;width:147.5px;height:220.2px;background:linear-gradient(90deg,#1010ff 0%,#2222ff 30%,#1010f0 60%,#0000b0 100%);"></div>
<div class="b" style="left:1063px;top:93.5px;width:4.8px;height:442.5px;background:linear-gradient(90deg,#9c9a96,#d4cfc6 50%,#a8a6a0);"></div>
<div class="b" style="left:1215px;top:93.5px;width:4.8px;height:442.5px;background:linear-gradient(90deg,#9c9a96,#d4cfc6 50%,#a8a6a0);"></div>
<div class="b" style="left:516px;top:551.2px;width:862.5px;height:20.6px;background:linear-gradient(180deg,#c0c0c1 0%,#c4c4c5 70%,#cdcbc6 100%);"></div>
<div class="b" style="left:513px;top:551.2px;width:2px;height:496.3px;background:#fbfaf6;"></div>
<div class="b" style="left:515px;top:551.2px;width:1px;height:496.3px;background:#aaa69e;"></div>
<div class="b" style="left:1378.5px;top:551.2px;width:2px;height:496.3px;background:#f4f2ec;"></div>
<div class="b" style="left:513px;top:1046px;width:867.5px;height:2px;background:#f4f2ec;"></div>
<div class="t tr" style="left:516.88px;top:553.52px;font-size:13.5px;transform:scaleX(1.0200);color:#20208e;">Spectrum</div>
<div class="b" style="left:1336px;top:552.8px;width:16.5px;height:16.7px;background:#efefef;border:2px solid #000;border-top-width:3.5px;"></div>
<svg style="left:1356px;top:552.8px" width="19" height="18" viewBox="0 0 19 18"><path d="M2 1.5 L17 16.5 M17 1.5 L2 16.5" stroke="#000" stroke-width="3"/></svg>
<div class="b" style="left:528px;top:581.3px;width:69px;height:16.1px;background:linear-gradient(180deg,#ebe9e5,#dedbd5);border-right:1.4px solid #000;border-bottom:1.4px solid #000;border-top:1px solid #f8f7f4;border-left:1px solid #f8f7f4;"></div>
<div class="t tb" style="left:530.67px;top:585.29px;font-size:8.6px;letter-spacing:0.940px;transform:scaleX(1.3);color:#1a1a1a;">Log scale</div>
<div class="b" style="left:615.3px;top:581.3px;width:67.7px;height:16.1px;background:linear-gradient(180deg,#ebe9e5,#dedbd5);border-right:1.4px solid #000;border-bottom:1.4px solid #000;border-top:1px solid #f8f7f4;border-left:1px solid #f8f7f4;"></div>
<div class="t tb" style="left:623.67px;top:585.29px;font-size:8.6px;letter-spacing:1.230px;transform:scaleX(1.3);color:#1a1a1a;">Normed</div>
<div class="b" style="left:702px;top:581px;width:67.5px;height:16px;background:#dccfb9;border-top:1.4px solid #000;border-left:1.4px solid #000;border-right:1px solid #f4f0e8;border-bottom:1px solid #f4f0e8;"></div>
<div class="t tb" style="left:711.25px;top:585.29px;font-size:8.6px;letter-spacing:0.958px;transform:scaleX(1.3);color:#1a1a1a;">Colored</div>
<div class="t tb" style="left:855.39px;top:578.7px;font-size:8px;letter-spacing:1.272px;transform:scaleX(1.3);color:#1a1a1a;">Show measurements:</div>
<div class="t tb" style="left:859.34px;top:589.7px;font-size:8px;letter-spacing:0.452px;transform:scaleX(1.3);color:#1a1a1a;">All</div>
<div class="t tb" style="left:929.04px;top:589.7px;font-size:8px;letter-spacing:1.050px;transform:scaleX(1.3);color:#1a1a1a;">Active</div>
<svg style="left:893px;top:586px" width="36" height="16" viewBox="0 0 36 16"><ellipse cx="19" cy="9.5" rx="14" ry="4" fill="#9a968e" opacity=".6"/><defs><linearGradient id="pl" x1="0" y1="0" x2="0" y2="1"><stop offset="0" stop-color="#f4f4f4"/><stop offset=".5" stop-color="#c8c8c8"/><stop offset="1" stop-color="#8c8c8c"/></linearGradient></defs><rect x="3" y="3" width="28" height="8.5" rx="4.2" fill="url(#pl)"/></svg>
<div class="b" style="left:1052.6px;top:576.8px;width:320.4px;height:24.2px;background:#d8d4cc;border-top:1px solid #f4f2ec;border-left:2px solid #b0aca4;"></div>
<div class="b" style="left:1057.3px;top:582.4px;width:164.4px;height:15.2px;background:linear-gradient(90deg,#e4e2de,#f2f1ef 60%,#d8d5d0);border:1.5px solid #000;"></div>
<div class="b" style="left:1199.6px;top:584px;width:1.2px;height:12px;background:#9a968e;"></div>
<svg style="left:1203px;top:585px" width="16" height="10" viewBox="0 0 16 10"><path d="M2 2.3 L14 2.3 L8 7.2Z" fill="#111"/></svg>
<div class="t tb" style="left:1063.69px;top:585.49px;font-size:8.6px;letter-spacing:1.263px;transform:scaleX(1.22);color:#111;">Zoom to Rectangle</div>
<div class="b" style="left:1227px;top:580.4px;width:141px;height:16.6px;background:linear-gradient(90deg,#f0efec,#e4e2de 80%,#a9a59e);border:1.5px solid #000;"></div>
<div class="t tb" style="left:1274.32px;top:584.69px;font-size:8.6px;letter-spacing:-0.964px;transform:scaleX(1.22);color:#111;">RESET</div>
<div class="b" style="left:516px;top:604px;width:862px;height:0;border-top:1.3px dotted #000"></div>
<div class="b" style="left:516px;top:606px;width:862.5px;height:412.5px;background:#d6d2ca;"></div>
<div class="b" style="left:516px;top:606px;width:15px;height:412.5px;background:linear-gradient(90deg,#d4d0c8 0%,#eeebe2 30%,#e8e5dc 60%,#d6d2ca 100%);"></div>
<div class="b" style="left:1356.6px;top:606px;width:21.9px;height:412.5px;background:linear-gradient(90deg,#d7d3cb 0%,#cfcbc3 50%,#a9a59d 85%,#7f7b74 100%);"></div>
<div class="b" style="left:531px;top:606px;width:825.6px;height:7.6px;background:linear-gradient(180deg,#e2dfd6,#d8d4cc);"></div>
<div class="b" style="left:516px;top:1018px;width:862.5px;height:2px;background:#ebe8e0;"></div>
<div class="b" style="left:516px;top:1021px;width:862px;height:0;border-top:1.3px dotted #000"></div>
<svg style="left:0;top:0" width="1910" height="1107" viewBox="0 0 1910 1107"><rect x="581.5" y="613.6" width="775.0999999999999" height="365.79999999999995" fill="#fff"/><path d="M601.5 613.6V979.4 M620.5 613.6V979.4 M639.5 613.6V979.4 M659.5 613.6V979.4 M678.5 613.6V979.4 M697.5 613.6V979.4 M717.5 613.6V979.4 M736.5 613.6V979.4 M755.5 613.6V979.4 M775.5 613.6V979.4 M794.5 613.6V979.4 M813.5 613.6V979.4 M833.5 613.6V979.4 M852.5 613.6V979.4 M871.5 613.6V979.4 M891.5 613.6V979.4 M910.5 613.6V979.4 M929.5 613.6V979.4 M949.5 613.6V979.4 M968.5 613.6V979.4 M987.5 613.6V979.4 M1007.5 613.6V979.4 M1026.5 613.6V979.4 M1045.5 613.6V979.4 M1065.5 613.6V979.4 M1084.5 613.6V979.4 M1103.5 613.6V979.4 M1123.5 613.6V979.4 M1142.5 613.6V979.4 M1161.5 613.6V979.4 M1181.5 613.6V979.4 M1200.5 613.6V979.4 M1219.5 613.6V979.4 M1239.5 613.6V979.4 M1258.5 613.6V979.4 M1277.5 613.6V979.4 M1297.5 613.6V979.4 M1316.5 613.6V979.4 M1335.5 613.6V979.4 M581.5 958.5H1356.6 M581.5 936.5H1356.6 M581.5 915.5H1356.6 M581.5 894.5H1356.6 M581.5 873.5H1356.6 M581.5 852.5H1356.6 M581.5 830.5H1356.6 M581.5 809.5H1356.6 M581.5 788.5H1356.6 M581.5 767.5H1356.6 M581.5 745.5H1356.6 M581.5 724.5H1356.6 M581.5 703.5H1356.6 M581.5 682.5H1356.6 M581.5 661.5H1356.6 M581.5 639.5H1356.6 M581.5 618.5H1356.6" stroke="#b4b4b4" stroke-width="1" fill="none"/><defs><linearGradient id="spg" gradientUnits="userSpaceOnUse" x1="581.9" y1="0" x2="1355.2" y2="0"><stop offset="0.0000" stop-color="#3030e8"/><stop offset="0.1250" stop-color="#3232ea"/><stop offset="0.1625" stop-color="#3535f0"/><stop offset="0.1950" stop-color="#3838f4"/><stop offset="0.2225" stop-color="#4c4cff"/><stop offset="0.2375" stop-color="#3a40f8"/><stop offset="0.2750" stop-color="#2050f5"/><stop offset="0.3050" stop-color="#1060f8"/><stop offset="0.3250" stop-color="#0090f0"/><stop offset="0.3400" stop-color="#00b8e8"/><stop offset="0.3500" stop-color="#00d8d8"/><stop offset="0.3650" stop-color="#00e0b0"/><stop offset="0.3862" stop-color="#00e880"/><stop offset="0.4062" stop-color="#00f040"/><stop offset="0.4268" stop-color="#20ff00"/><stop offset="0.4470" stop-color="#80f020"/><stop offset="0.4675" stop-color="#c0f040"/><stop offset="0.4975" stop-color="#e8e850"/><stop offset="0.5350" stop-color="#ffc848"/><stop offset="0.5625" stop-color="#ffc050"/><stop offset="0.6000" stop-color="#ff9850"/><stop offset="0.6450" stop-color="#ff7848"/><stop offset="0.6900" stop-color="#ff4a40"/><stop offset="1.0000" stop-color="#ff4040"/></linearGradient></defs><path d="M581.9 979.4 L581.9 979.4 L582.9 979.4 L583.8 979.4 L584.8 979.4 L585.8 979.4 L586.7 979.4 L587.7 979.4 L588.7 979.4 L589.6 979.4 L590.6 979.4 L591.6 979.4 L592.5 979.4 L593.5 979.4 L594.5 979.4 L595.4 979.4 L596.4 979.4 L597.4 979.4 L598.3 979.4 L599.3 979.4 L600.3 979.4 L601.2 979.4 L602.2 979.4 L603.2 979.4 L604.1 979.4 L605.1 979.4 L606.1 979.4 L607.0 979.4 L608.0 979.4 L609.0 979.4 L609.9 979.4 L610.9 979.4 L611.9 979.4 L612.8 979.4 L613.8 979.4 L614.8 979.4 L615.7 979.4 L616.7 979.4 L617.7 979.4 L618.6 979.4 L619.6 979.4 L620.6 979.4 L621.5 979.4 L622.5 979.4 L623.5 979.4 L624.4 979.4 L625.4 979.4 L626.4 979.4 L627.3 979.4 L628.3 979.4 L629.3 979.4 L630.2 979.4 L631.2 979.4 L632.2 979.4 L633.1 979.4 L634.1 979.4 L635.1 979.4 L636.0 979.4 L637.0 979.4 L638.0 979.4 L638.9 979.4 L639.9 979.4 L640.9 979.4 L641.8 979.4 L642.8 979.4 L643.8 979.4 L644.7 979.4 L645.7 979.4 L646.7 979.4 L647.6 979.4 L648.6 979.4 L649.6 979.4 L650.5 979.4 L651.5 979.4 L652.5 979.4 L653.4 979.4 L654.4 979.4 L655.4 979.4 L656.3 979.4 L657.3 979.4 L658.3 979.4 L659.2 979.4 L660.2 979.4 L661.2 979.4 L662.1 979.4 L663.1 979.4 L664.1 979.4 L665.0 979.4 L666.0 979.4 L667.0 979.4 L667.9 979.4 L668.9 979.4 L669.9 979.4 L670.8 979.3 L671.8 979.2 L672.8 979.1 L673.7 978.9 L674.7 978.7 L675.7 978.5 L676.6 978.3 L677.6 978.1 L678.6 977.7 L679.5 977.2 L680.5 976.7 L681.5 976.1 L682.4 975.2 L683.4 974.0 L684.4 972.8 L685.3 971.7 L686.3 970.9 L687.3 970.4 L688.2 970.0 L689.2 969.6 L690.2 969.3 L691.1 968.9 L692.1 968.4 L693.1 967.8 L694.0 967.1 L695.0 966.3 L696.0 965.5 L696.9 964.6 L697.9 963.7 L698.9 962.7 L699.8 961.5 L700.8 960.3 L701.8 959.0 L702.7 957.6 L703.7 956.0 L704.7 954.3 L705.6 952.5 L706.6 950.6 L707.6 948.5 L708.5 946.3 L709.5 944.0 L710.5 941.6 L711.4 939.0 L712.4 936.2 L713.4 933.2 L714.3 929.7 L715.3 925.6 L716.3 921.1 L717.2 916.2 L718.2 911.1 L719.2 905.7 L720.1 900.1 L721.1 894.2 L722.1 887.6 L723.0 880.5 L724.0 872.9 L725.0 865.1 L725.9 857.2 L726.9 849.3 L727.9 841.7 L728.8 834.3 L729.8 827.0 L730.8 819.6 L731.7 812.3 L732.7 805.0 L733.7 797.7 L734.6 790.3 L735.6 783.0 L736.6 775.6 L737.5 767.1 L738.5 758.1 L739.5 749.8 L740.4 743.2 L741.4 739.4 L742.4 737.4 L743.3 735.7 L744.3 734.3 L745.3 733.4 L746.2 732.9 L747.2 732.9 L748.2 733.6 L749.1 734.7 L750.1 736.2 L751.1 737.9 L752.0 739.8 L753.0 742.8 L754.0 747.2 L754.9 752.6 L755.9 758.8 L756.9 765.4 L757.8 772.1 L758.8 778.7 L759.8 785.0 L760.7 791.3 L761.7 798.1 L762.7 805.2 L763.6 812.5 L764.6 819.8 L765.6 827.0 L766.5 834.1 L767.5 840.8 L768.5 847.1 L769.4 852.9 L770.4 857.9 L771.4 862.7 L772.3 867.3 L773.3 871.7 L774.3 876.1 L775.2 880.2 L776.2 884.2 L777.2 888.0 L778.1 891.6 L779.1 895.0 L780.1 898.3 L781.0 901.3 L782.0 904.0 L783.0 906.6 L783.9 908.9 L784.9 911.2 L785.9 913.5 L786.8 915.7 L787.8 917.7 L788.8 919.7 L789.7 921.6 L790.7 923.4 L791.7 925.0 L792.6 926.5 L793.6 927.8 L794.6 929.0 L795.5 930.0 L796.5 930.7 L797.5 931.4 L798.4 932.1 L799.4 932.8 L800.4 933.3 L801.3 933.8 L802.3 934.1 L803.3 934.4 L804.2 934.4 L805.2 934.3 L806.2 934.1 L807.1 933.7 L808.1 933.2 L809.1 932.6 L810.0 932.0 L811.0 931.2 L812.0 930.4 L812.9 929.5 L813.9 928.6 L814.9 927.6 L815.8 926.7 L816.8 925.7 L817.8 924.7 L818.7 923.5 L819.7 922.1 L820.7 920.5 L821.6 918.8 L822.6 917.0 L823.6 915.1 L824.5 913.2 L825.5 911.3 L826.5 909.3 L827.4 907.4 L828.4 905.5 L829.4 903.3 L830.3 901.0 L831.3 898.6 L832.3 896.1 L833.2 893.6 L834.2 891.2 L835.2 888.7 L836.1 886.4 L837.1 884.3 L838.1 882.3 L839.0 880.6 L840.0 879.1 L841.0 878.0 L841.9 877.0 L842.9 876.0 L843.9 875.0 L844.8 874.1 L845.8 873.2 L846.8 872.5 L847.7 871.9 L848.7 871.4 L849.7 871.0 L850.6 870.8 L851.6 870.8 L852.6 870.9 L853.5 871.3 L854.5 871.8 L855.5 872.5 L856.4 873.2 L857.4 874.0 L858.4 874.9 L859.3 875.9 L860.3 876.8 L861.3 877.8 L862.2 878.8 L863.2 879.9 L864.2 881.1 L865.1 882.5 L866.1 884.0 L867.1 885.6 L868.0 887.3 L869.0 889.0 L870.0 890.8 L870.9 892.6 L871.9 894.4 L872.9 896.2 L873.8 898.1 L874.8 899.9 L875.8 901.6 L876.7 903.3 L877.7 904.9 L878.7 906.6 L879.6 908.2 L880.6 909.9 L881.6 911.6 L882.5 913.3 L883.5 915.0 L884.5 916.7 L885.4 918.4 L886.4 920.0 L887.4 921.7 L888.3 923.3 L889.3 924.8 L890.3 926.4 L891.2 927.8 L892.2 929.2 L893.2 930.6 L894.1 931.9 L895.1 933.2 L896.1 934.5 L897.0 935.7 L898.0 936.9 L899.0 938.1 L899.9 939.3 L900.9 940.5 L901.9 941.6 L902.8 942.7 L903.8 943.8 L904.8 944.9 L905.7 945.9 L906.7 946.9 L907.7 947.9 L908.6 948.9 L909.6 949.8 L910.6 950.7 L911.5 951.6 L912.5 952.4 L913.5 953.3 L914.4 954.1 L915.4 954.9 L916.4 955.7 L917.3 956.5 L918.3 957.3 L919.3 958.1 L920.2 958.8 L921.2 959.5 L922.2 960.2 L923.1 960.9 L924.1 961.6 L925.1 962.2 L926.0 962.7 L927.0 963.3 L928.0 963.8 L928.9 964.2 L929.9 964.6 L930.9 965.0 L931.8 965.4 L932.8 965.7 L933.8 966.1 L934.7 966.4 L935.7 966.7 L936.7 967.0 L937.6 967.3 L938.6 967.5 L939.6 967.8 L940.5 968.0 L941.5 968.3 L942.5 968.5 L943.4 968.8 L944.4 969.0 L945.4 969.2 L946.3 969.4 L947.3 969.7 L948.3 969.9 L949.2 970.1 L950.2 970.4 L951.2 970.6 L952.1 970.8 L953.1 971.0 L954.1 971.3 L955.0 971.5 L956.0 971.7 L957.0 971.9 L957.9 972.1 L958.9 972.3 L959.9 972.6 L960.8 972.8 L961.8 973.0 L962.8 973.2 L963.7 973.3 L964.7 973.5 L965.7 973.7 L966.6 973.9 L967.6 974.0 L968.6 974.2 L969.5 974.3 L970.5 974.5 L971.5 974.6 L972.4 974.7 L973.4 974.9 L974.4 975.0 L975.3 975.1 L976.3 975.2 L977.3 975.3 L978.2 975.3 L979.2 975.4 L980.2 975.3 L981.1 975.3 L982.1 975.1 L983.1 974.9 L984.0 974.7 L985.0 974.4 L986.0 974.1 L986.9 973.7 L987.9 973.3 L988.9 973.0 L989.8 972.6 L990.8 972.2 L991.8 971.8 L992.7 971.4 L993.7 971.0 L994.7 970.6 L995.6 970.2 L996.6 969.7 L997.6 969.2 L998.5 968.7 L999.5 968.2 L1000.5 967.6 L1001.4 967.1 L1002.4 966.5 L1003.4 965.8 L1004.3 965.1 L1005.3 964.4 L1006.3 963.7 L1007.2 962.9 L1008.2 962.1 L1009.2 961.3 L1010.1 960.3 L1011.1 959.3 L1012.1 958.1 L1013.0 956.9 L1014.0 955.6 L1015.0 954.2 L1015.9 952.7 L1016.9 951.1 L1017.9 949.4 L1018.8 947.7 L1019.8 945.8 L1020.8 943.9 L1021.7 941.8 L1022.7 939.6 L1023.7 937.0 L1024.6 934.2 L1025.6 931.1 L1026.6 927.8 L1027.5 924.3 L1028.5 920.6 L1029.5 916.8 L1030.4 913.0 L1031.4 909.0 L1032.4 904.9 L1033.3 900.7 L1034.3 896.3 L1035.3 891.6 L1036.2 886.7 L1037.2 881.5 L1038.2 876.1 L1039.1 870.3 L1040.1 864.1 L1041.1 857.6 L1042.0 850.4 L1043.0 842.3 L1044.0 833.4 L1044.9 823.9 L1045.9 813.9 L1046.9 803.5 L1047.8 792.7 L1048.8 781.8 L1049.8 770.9 L1050.7 760.0 L1051.7 748.4 L1052.7 735.6 L1053.6 722.4 L1054.6 709.2 L1055.6 696.9 L1056.5 686.0 L1057.5 677.1 L1058.5 668.5 L1059.4 660.2 L1060.4 653.2 L1061.4 648.6 L1062.3 647.4 L1063.3 650.0 L1064.3 655.7 L1065.2 663.3 L1066.2 671.9 L1067.2 680.4 L1068.1 690.5 L1069.1 702.7 L1070.1 716.5 L1071.0 731.3 L1072.0 746.6 L1073.0 761.8 L1073.9 776.5 L1074.9 790.1 L1075.9 802.9 L1076.8 815.9 L1077.8 829.1 L1078.8 842.0 L1079.7 854.5 L1080.7 866.1 L1081.7 876.6 L1082.6 885.6 L1083.6 893.1 L1084.6 899.9 L1085.5 906.4 L1086.5 912.4 L1087.5 918.1 L1088.4 923.3 L1089.4 928.1 L1090.4 932.4 L1091.3 936.4 L1092.3 939.8 L1093.3 942.8 L1094.2 945.6 L1095.2 948.3 L1096.2 950.8 L1097.1 953.2 L1098.1 955.5 L1099.1 957.6 L1100.0 959.6 L1101.0 961.4 L1102.0 963.0 L1102.9 964.5 L1103.9 965.9 L1104.9 967.0 L1105.8 968.0 L1106.8 968.8 L1107.8 969.6 L1108.7 970.3 L1109.7 970.9 L1110.7 971.5 L1111.6 972.1 L1112.6 972.6 L1113.6 973.1 L1114.5 973.6 L1115.5 974.0 L1116.5 974.4 L1117.4 974.8 L1118.4 975.1 L1119.4 975.5 L1120.3 975.9 L1121.3 976.2 L1122.3 976.6 L1123.2 976.9 L1124.2 977.2 L1125.2 977.5 L1126.1 977.8 L1127.1 978.1 L1128.1 978.3 L1129.0 978.5 L1130.0 978.7 L1131.0 978.8 L1131.9 978.9 L1132.9 978.9 L1133.9 979.0 L1134.8 979.1 L1135.8 979.2 L1136.8 979.2 L1137.7 979.3 L1138.7 979.3 L1139.7 979.4 L1140.6 979.4 L1141.6 979.4 L1142.6 979.4 L1143.5 979.4 L1144.5 979.4 L1145.5 979.4 L1146.4 979.4 L1147.4 979.4 L1148.4 979.4 L1149.3 979.4 L1150.3 979.4 L1151.3 979.4 L1152.2 979.4 L1153.2 979.4 L1154.2 979.4 L1155.1 979.4 L1156.1 979.4 L1157.1 979.4 L1158.0 979.4 L1159.0 979.4 L1160.0 979.4 L1160.9 979.4 L1161.9 979.4 L1162.9 979.4 L1163.8 979.4 L1164.8 979.4 L1165.8 979.4 L1166.7 979.4 L1167.7 979.4 L1168.7 979.4 L1169.6 979.4 L1170.6 979.4 L1171.6 979.4 L1172.5 979.4 L1173.5 979.4 L1174.5 979.4 L1175.4 979.4 L1176.4 979.4 L1177.4 979.4 L1178.3 979.4 L1179.3 979.4 L1180.3 979.4 L1181.2 979.4 L1182.2 979.4 L1183.2 979.4 L1184.1 979.4 L1185.1 979.4 L1186.1 979.4 L1187.0 979.4 L1188.0 979.4 L1189.0 979.4 L1189.9 979.4 L1190.9 979.4 L1191.9 979.4 L1192.8 979.4 L1193.8 979.4 L1194.8 979.4 L1195.7 979.4 L1196.7 979.4 L1197.7 979.4 L1198.6 979.4 L1199.6 979.4 L1200.6 979.4 L1201.5 979.4 L1202.5 979.4 L1203.5 979.4 L1204.4 979.4 L1205.4 979.4 L1206.4 979.4 L1207.3 979.4 L1208.3 979.4 L1209.3 979.4 L1210.2 979.4 L1211.2 979.4 L1212.2 979.4 L1213.1 979.4 L1214.1 979.4 L1215.1 979.4 L1216.0 979.4 L1217.0 979.4 L1218.0 979.4 L1218.9 979.4 L1219.9 979.4 L1220.9 979.4 L1221.8 979.4 L1222.8 979.4 L1223.8 979.4 L1224.7 979.4 L1225.7 979.4 L1226.7 979.4 L1227.6 979.4 L1228.6 979.4 L1229.6 979.4 L1230.5 979.4 L1231.5 979.4 L1232.5 979.4 L1233.4 979.4 L1234.4 979.4 L1235.4 979.4 L1236.3 979.4 L1237.3 979.4 L1238.3 979.4 L1239.2 979.4 L1240.2 979.4 L1241.2 979.4 L1242.1 979.4 L1243.1 979.4 L1244.1 979.4 L1245.0 979.4 L1246.0 979.4 L1247.0 979.4 L1247.9 979.4 L1248.9 979.4 L1249.9 979.4 L1250.8 979.4 L1251.8 979.4 L1252.8 979.4 L1253.7 979.4 L1254.7 979.4 L1255.7 979.4 L1256.6 979.4 L1257.6 979.4 L1258.6 979.4 L1259.5 979.4 L1260.5 979.4 L1261.5 979.4 L1262.4 979.4 L1263.4 979.4 L1264.4 979.4 L1265.3 979.4 L1266.3 979.4 L1267.3 979.4 L1268.2 979.4 L1269.2 979.4 L1270.2 979.4 L1271.1 979.4 L1272.1 979.4 L1273.1 979.4 L1274.0 979.4 L1275.0 979.4 L1276.0 979.4 L1276.9 979.4 L1277.9 979.4 L1278.9 979.4 L1279.8 979.4 L1280.8 979.4 L1281.8 979.4 L1282.7 979.4 L1283.7 979.4 L1284.7 979.4 L1285.6 979.4 L1286.6 979.4 L1287.6 979.4 L1288.5 979.4 L1289.5 979.4 L1290.5 979.4 L1291.4 979.4 L1292.4 979.4 L1293.4 979.4 L1294.3 979.4 L1295.3 979.4 L1296.3 979.4 L1297.2 979.4 L1298.2 979.4 L1299.2 979.4 L1300.1 979.4 L1301.1 979.4 L1302.1 979.4 L1303.0 979.4 L1304.0 979.4 L1305.0 979.4 L1305.9 979.4 L1306.9 979.4 L1307.9 979.4 L1308.8 979.4 L1309.8 979.4 L1310.8 979.4 L1311.7 979.4 L1312.7 979.4 L1313.7 979.4 L1314.6 979.4 L1315.6 979.4 L1316.6 979.4 L1317.5 979.4 L1318.5 979.4 L1319.5 979.4 L1320.4 979.4 L1321.4 979.4 L1322.4 979.4 L1323.3 979.4 L1324.3 979.4 L1325.3 979.4 L1326.2 979.4 L1327.2 979.4 L1328.2 979.4 L1329.1 979.4 L1330.1 979.4 L1331.1 979.4 L1332.0 979.4 L1333.0 979.4 L1334.0 979.4 L1334.9 979.4 L1335.9 979.4 L1336.9 979.4 L1337.8 979.4 L1338.8 979.4 L1339.8 979.4 L1340.7 979.4 L1341.7 979.4 L1342.7 979.4 L1343.6 979.4 L1344.6 979.4 L1345.6 979.4 L1346.5 979.4 L1347.5 979.4 L1348.5 979.4 L1349.4 979.4 L1350.4 979.4 L1351.4 979.4 L1352.3 979.4 L1353.3 979.4 L1354.3 979.4 L1355.2 979.4 L1355.2 979.4Z" fill="url(#spg)" stroke="#1a1a1a" stroke-width="1.1"/><rect x="581.5" y="977" width="775.0999999999999" height="3" fill="#000"/><rect x="1211.3" y="613.6" width="2.6" height="365.79999999999995" fill="#000"/><circle cx="1212.6" cy="979" r="2.2" fill="#fff" stroke="#000" stroke-width="1"/><path d="M581.9 982V988 M601.2 982V988 M620.6 982V988 M639.9 982V988 M659.2 982V988 M678.6 982V988 M697.9 982V988 M717.2 982V988 M736.6 982V988 M755.9 982V988 M775.2 982V988 M794.6 982V988 M813.9 982V988 M833.2 982V988 M852.6 982V988 M871.9 982V988 M891.2 982V988 M910.6 982V988 M929.9 982V988 M949.2 982V988 M968.6 982V988 M987.9 982V988 M1007.2 982V988 M1026.6 982V988 M1045.9 982V988 M1065.2 982V988 M1084.6 982V988 M1103.9 982V988 M1123.2 982V988 M1142.6 982V988 M1161.9 982V988 M1181.2 982V988 M1200.6 982V988 M1219.9 982V988 M1239.2 982V988 M1258.6 982V988 M1277.9 982V988 M1297.2 982V988 M1316.6 982V988 M1335.9 982V988 M1355.2 982V988 M574.2 979.4H580 M574.2 958.2H580 M574.2 937.0H580 M574.2 915.7H580 M574.2 894.5H580 M574.2 873.3H580 M574.2 852.1H580 M574.2 830.9H580 M574.2 809.6H580 M574.2 788.4H580 M574.2 767.2H580 M574.2 746.0H580 M574.2 724.8H580 M574.2 703.5H580 M574.2 682.3H580 M574.2 661.1H580 M574.2 639.9H580 M574.2 614.4H580" stroke="#000" stroke-width="1.3" fill="none"/></svg>
<div class="t tb" style="left:545.38px;top:975.47px;font-size:7.8px;transform:scaleX(0.9200);color:#0a0a0a;">0,00E+0</div>
<div class="t tb" style="left:546.92px;top:954.25px;font-size:7.8px;transform:scaleX(0.9200);color:#0a0a0a;">1,00E-4</div>
<div class="t tb" style="left:546.92px;top:933.03px;font-size:7.8px;transform:scaleX(0.9200);color:#0a0a0a;">2,00E-4</div>
<div class="t tb" style="left:546.92px;top:911.81px;font-size:7.8px;transform:scaleX(0.9200);color:#0a0a0a;">3,00E-4</div>
<div class="t tb" style="left:546.92px;top:890.59px;font-size:7.8px;transform:scaleX(0.9200);color:#0a0a0a;">4,00E-4</div>
<div class="t tb" style="left:546.92px;top:869.37px;font-size:7.8px;transform:scaleX(0.9200);color:#0a0a0a;">5,00E-4</div>
<div class="t tb" style="left:546.92px;top:848.15px;font-size:7.8px;transform:scaleX(0.9200);color:#0a0a0a;">6,00E-4</div>
<div class="t tb" style="left:546.92px;top:826.93px;font-size:7.8px;transform:scaleX(0.9200);color:#0a0a0a;">7,00E-4</div>
<div class="t tb" style="left:546.92px;top:805.71px;font-size:7.8px;transform:scaleX(0.9200);color:#0a0a0a;">8,00E-4</div>
<div class="t tb" style="left:546.92px;top:784.49px;font-size:7.8px;transform:scaleX(0.9200);color:#0a0a0a;">9,00E-4</div>
<div class="t tb" style="left:547.14px;top:763.27px;font-size:7.8px;transform:scaleX(0.9200);color:#0a0a0a;">1,00E-3</div>
<div class="t tb" style="left:547.14px;top:742.05px;font-size:7.8px;transform:scaleX(0.9200);color:#0a0a0a;">1,10E-3</div>
<div class="t tb" style="left:547.14px;top:720.83px;font-size:7.8px;transform:scaleX(0.9200);color:#0a0a0a;">1,20E-3</div>
<div class="t tb" style="left:547.14px;top:699.61px;font-size:7.8px;transform:scaleX(0.9200);color:#0a0a0a;">1,30E-3</div>
<div class="t tb" style="left:547.14px;top:678.39px;font-size:7.8px;transform:scaleX(0.9200);color:#0a0a0a;">1,40E-3</div>
<div class="t tb" style="left:547.14px;top:657.17px;font-size:7.8px;transform:scaleX(0.9200);color:#0a0a0a;">1,50E-3</div>
<div class="t tb" style="left:547.14px;top:635.95px;font-size:7.8px;transform:scaleX(0.9200);color:#0a0a0a;">1,60E-3</div>
<div class="t tb" style="left:547.14px;top:610.47px;font-size:7.8px;transform:scaleX(0.9200);color:#0a0a0a;">1,72E-3</div>
<div class="t tb" style="left:575.98px;top:989.27px;font-size:7.8px;transform:scaleX(0.9200);color:#0a0a0a;">380</div>
<div class="t tb" style="left:595.31px;top:989.27px;font-size:7.8px;transform:scaleX(0.9200);color:#0a0a0a;">390</div>
<div class="t tb" style="left:614.68px;top:989.27px;font-size:7.8px;transform:scaleX(0.9200);color:#0a0a0a;">400</div>
<div class="t tb" style="left:634.01px;top:989.27px;font-size:7.8px;transform:scaleX(0.9200);color:#0a0a0a;">410</div>
<div class="t tb" style="left:653.35px;top:989.27px;font-size:7.8px;transform:scaleX(0.9200);color:#0a0a0a;">420</div>
<div class="t tb" style="left:672.68px;top:989.27px;font-size:7.8px;transform:scaleX(0.9200);color:#0a0a0a;">430</div>
<div class="t tb" style="left:692.01px;top:989.27px;font-size:7.8px;transform:scaleX(0.9200);color:#0a0a0a;">440</div>
<div class="t tb" style="left:711.35px;top:989.27px;font-size:7.8px;transform:scaleX(0.9200);color:#0a0a0a;">450</div>
<div class="t tb" style="left:730.68px;top:989.27px;font-size:7.8px;transform:scaleX(0.9200);color:#0a0a0a;">460</div>
<div class="t tb" style="left:750.01px;top:989.27px;font-size:7.8px;transform:scaleX(0.9200);color:#0a0a0a;">470</div>
<div class="t tb" style="left:769.35px;top:989.27px;font-size:7.8px;transform:scaleX(0.9200);color:#0a0a0a;">480</div>
<div class="t tb" style="left:788.68px;top:989.27px;font-size:7.8px;transform:scaleX(0.9200);color:#0a0a0a;">490</div>
<div class="t tb" style="left:807.96px;top:989.27px;font-size:7.8px;transform:scaleX(0.9200);color:#0a0a0a;">500</div>
<div class="t tb" style="left:827.29px;top:989.27px;font-size:7.8px;transform:scaleX(0.9200);color:#0a0a0a;">510</div>
<div class="t tb" style="left:846.62px;top:989.27px;font-size:7.8px;transform:scaleX(0.9200);color:#0a0a0a;">520</div>
<div class="t tb" style="left:865.96px;top:989.27px;font-size:7.8px;transform:scaleX(0.9200);color:#0a0a0a;">530</div>
<div class="t tb" style="left:885.29px;top:989.27px;font-size:7.8px;transform:scaleX(0.9200);color:#0a0a0a;">540</div>
<div class="t tb" style="left:904.62px;top:989.27px;font-size:7.8px;transform:scaleX(0.9200);color:#0a0a0a;">550</div>
<div class="t tb" style="left:923.96px;top:989.27px;font-size:7.8px;transform:scaleX(0.9200);color:#0a0a0a;">560</div>
<div class="t tb" style="left:943.29px;top:989.27px;font-size:7.8px;transform:scaleX(0.9200);color:#0a0a0a;">570</div>
<div class="t tb" style="left:962.62px;top:989.27px;font-size:7.8px;transform:scaleX(0.9200);color:#0a0a0a;">580</div>
<div class="t tb" style="left:981.95px;top:989.27px;font-size:7.8px;transform:scaleX(0.9200);color:#0a0a0a;">590</div>
<div class="t tb" style="left:1001.27px;top:989.27px;font-size:7.8px;transform:scaleX(0.9200);color:#0a0a0a;">600</div>
<div class="t tb" style="left:1020.6px;top:989.27px;font-size:7.8px;transform:scaleX(0.9200);color:#0a0a0a;">610</div>
<div class="t tb" style="left:1039.94px;top:989.27px;font-size:7.8px;transform:scaleX(0.9200);color:#0a0a0a;">620</div>
<div class="t tb" style="left:1059.27px;top:989.27px;font-size:7.8px;transform:scaleX(0.9200);color:#0a0a0a;">630</div>
<div class="t tb" style="left:1078.6px;top:989.27px;font-size:7.8px;transform:scaleX(0.9200);color:#0a0a0a;">640</div>
<div class="t tb" style="left:1097.93px;top:989.27px;font-size:7.8px;transform:scaleX(0.9200);color:#0a0a0a;">650</div>
<div class="t tb" style="left:1117.27px;top:989.27px;font-size:7.8px;transform:scaleX(0.9200);color:#0a0a0a;">660</div>
<div class="t tb" style="left:1136.6px;top:989.27px;font-size:7.8px;transform:scaleX(0.9200);color:#0a0a0a;">670</div>
<div class="t tb" style="left:1155.93px;top:989.27px;font-size:7.8px;transform:scaleX(0.9200);color:#0a0a0a;">680</div>
<div class="t tb" style="left:1175.27px;top:989.27px;font-size:7.8px;transform:scaleX(0.9200);color:#0a0a0a;">690</div>
<div class="t tb" style="left:1194.58px;top:989.27px;font-size:7.8px;transform:scaleX(0.9200);color:#0a0a0a;">700</div>
<div class="t tb" style="left:1213.91px;top:989.27px;font-size:7.8px;transform:scaleX(0.9200);color:#0a0a0a;">710</div>
<div class="t tb" style="left:1233.25px;top:989.27px;font-size:7.8px;transform:scaleX(0.9200);color:#0a0a0a;">720</div>
<div class="t tb" style="left:1252.58px;top:989.27px;font-size:7.8px;transform:scaleX(0.9200);color:#0a0a0a;">730</div>
<div class="t tb" style="left:1271.91px;top:989.27px;font-size:7.8px;transform:scaleX(0.9200);color:#0a0a0a;">740</div>
<div class="t tb" style="left:1291.25px;top:989.27px;font-size:7.8px;transform:scaleX(0.9200);color:#0a0a0a;">750</div>
<div class="t tb" style="left:1310.58px;top:989.27px;font-size:7.8px;transform:scaleX(0.9200);color:#0a0a0a;">760</div>
<div class="t tb" style="left:1329.91px;top:989.27px;font-size:7.8px;transform:scaleX(0.9200);color:#0a0a0a;">770</div>
<div class="t tb" style="left:1349.25px;top:989.27px;font-size:7.8px;transform:scaleX(0.9200);color:#0a0a0a;">780</div>
<div class="t tb" style="left:955.96px;top:1003.49px;font-size:8.6px;transform:scaleX(1.0301);color:#111;">λ [nm]</div>
<div class="t tr" style="left:536.6px;top:856.9px;font-size:9.6px;transform-origin:0 0;transform:rotate(-90deg) scaleX(1.02) translateY(-8.16px);color:#111">Radiance [W/(sr*sqm*nm)]</div>
<div class="t tr" style="left:539.4px;top:1030.35px;font-size:9px;transform:scaleX(1.1000);color:#111;">λ</div>
<div class="b" style="left:552px;top:1033.2px;width:6.3px;height:2.4px;background:#111;"></div>
<div class="b" style="left:563.8px;top:1027.3px;width:68.7px;height:14.7px;background:#fff;border-top:2px solid #b4b0a8;border-left:2px solid #b4b0a8;border-right:1px solid #ebe8e2;border-bottom:1px solid #ebe8e2;"></div>
<div class="t tr" style="left:603.95px;top:1029.89px;font-size:8.6px;transform:scaleX(1.7350);color:#111;">706</div>
<div class="t tr" style="left:636.67px;top:1029.89px;font-size:8.6px;transform:scaleX(1.6704);color:#1a1a1a;">nm</div>
<div class="t tr" style="left:730.2px;top:1029.89px;font-size:8.6px;letter-spacing:1.086px;transform:scaleX(1.3);color:#1a1a1a;">Spectral Radiance [W/(sr*sqm*nm)]</div>
<div class="b" style="left:965.6px;top:1027.3px;width:67.9px;height:14.7px;background:#fff;border-top:2px solid #b4b0a8;border-left:2px solid #b4b0a8;border-right:1px solid #ebe8e2;border-bottom:1px solid #ebe8e2;"></div>
<div class="t tr" style="left:972.38px;top:1029.89px;font-size:8.6px;letter-spacing:1.349px;transform:scaleX(1.3);color:#1a1a1a;">4,060E-6</div>
<div class="t tr" style="left:1067.5px;top:1029.89px;font-size:8.6px;letter-spacing:1.258px;transform:scaleX(1.3);color:#1a1a1a;">Spectrum range:</div>
<div class="b" style="left:1177px;top:1026px;width:11.5px;height:17px;background:linear-gradient(90deg,#eeece8,#d0ccc4);border-right:1px solid #8a867e;"></div>
<svg style="left:1177px;top:1026px" width="11.5" height="17" viewBox="0 0 11.5 17"><path d="M2.25 7 L5.75 2.5 L9.25 7Z M2.25 10 L5.75 14.5 L9.25 10Z" fill="#333"/></svg>
<div class="b" style="left:1191px;top:1027.3px;width:56.5px;height:14.7px;background:#fff;border-top:2px solid #b4b0a8;border-left:2px solid #b4b0a8;border-right:1px solid #ebe8e2;border-bottom:1px solid #ebe8e2;"></div>
<div class="t tr" style="left:1218.92px;top:1029.69px;font-size:8.6px;transform:scaleX(1.6820);color:#111;">380</div>
<div class="t tr" style="left:1253.35px;top:1029.89px;font-size:8.6px;transform:scaleX(1.9231);color:#1a1a1a;">to</div>
<div class="b" style="left:1272px;top:1026px;width:11px;height:17px;background:linear-gradient(90deg,#eeece8,#d0ccc4);border-right:1px solid #8a867e;"></div>
<svg style="left:1272px;top:1026px" width="11" height="17" viewBox="0 0 11 17"><path d="M2 7 L5.5 2.5 L9 7Z M2 10 L5.5 14.5 L9 10Z" fill="#333"/></svg>
<div class="b" style="left:1285.6px;top:1027.3px;width:55.9px;height:14.7px;background:#fff;border-top:2px solid #b4b0a8;border-left:2px solid #b4b0a8;border-right:1px solid #ebe8e2;border-bottom:1px solid #ebe8e2;"></div>
<div class="t tr" style="left:1312.77px;top:1029.69px;font-size:8.6px;transform:scaleX(1.6927);color:#111;">780</div>
<div class="t tr" style="left:1345.58px;top:1029.89px;font-size:8.6px;transform:scaleX(1.6427);color:#1a1a1a;">nm</div>
<div class="b" style="left:1380.5px;top:47px;width:17.3px;height:1001px;background:#f3f1ee;"></div>
<div class="b" style="left:1381px;top:47.2px;width:15.8px;height:15.3px;background:linear-gradient(135deg,#f8f7f4,#d6d2ca);border-right:1.2px solid #000;border-bottom:1.2px solid #000;"></div>
<svg style="left:1384.9px;top:51.35px" width="8" height="7"><path d="M4 1.5 L6.5 5.5 L1.5 5.5Z" fill="#8a8680"/></svg>
<div class="b" style="left:1381px;top:1032px;width:15.8px;height:15.8px;background:linear-gradient(135deg,#f8f7f4,#d6d2ca);border-right:1.2px solid #000;border-bottom:1.2px solid #000;"></div>
<svg style="left:1384.9px;top:1036.4px" width="8" height="7"><path d="M1.5 1.5 L6.5 1.5 L4 5.5Z" fill="#8a8680"/></svg>
<div class="b" style="left:1397.8px;top:46px;width:1.2px;height:1020px;background:#000;"></div>
<div class="b" style="left:513px;top:1048px;width:867.5px;height:16.8px;background:#f3f1ee;"></div>
<div class="b" style="left:513px;top:1048.8px;width:15.6px;height:15.4px;background:linear-gradient(135deg,#f8f7f4,#d6d2ca);border-right:1.2px solid #000;border-bottom:1.2px solid #000;"></div>
<svg style="left:516.8px;top:1053px" width="8" height="7"><path d="M1.5 3.5 L5.5 1 L5.5 6Z" fill="#8a8680"/></svg>
<div class="b" style="left:1365px;top:1049.5px;width:15.5px;height:14.7px;background:linear-gradient(135deg,#f8f7f4,#d6d2ca);border-right:1.2px solid #000;border-bottom:1.2px solid #000;"></div>
<svg style="left:1368.75px;top:1053.35px" width="8" height="7"><path d="M6.5 3.5 L2.5 1 L2.5 6Z" fill="#8a8680"/></svg>
<div class="b" style="left:512px;top:1064.8px;width:887px;height:1.7px;background:#000;"></div>
<div class="b" style="left:1462.1px;top:53.4px;width:133.7px;height:73.3px;background:#dcd8d2;border-top:3px solid #f2efe9;border-left:2.5px solid #f2efe9;border-right:2px solid #8e8a83;border-bottom:2px solid #8e8a83;"></div>
<div class="t tb" style="left:1497.08px;top:79.6px;font-size:18px;transform:scaleX(1.1956);color:#000;-webkit-text-stroke:0.35px #000;">Target</div>
<svg style="left:1730px;top:17px" width="170" height="125" viewBox="1730 17 170 125"><rect x="1730.1" y="17" width="169.5" height="124.6" fill="#fdfdfb"/><rect x="1731.1" y="17" width="168.5" height="44.9" fill="#a3a7a9"/><path d="M1730 30.9 L1764.3 56.8 L1816.2 17 L1827.6 17 L1770.6 61.9 L1759 61.9 L1730 39.7Z" fill="#fdfdfb"/><rect x="1731.1" y="68.2" width="168.5" height="4.4" fill="#1670b0"/><path d="M1731.1 81.5 L1759.2 81.5 L1759.2 121 Q1758 136 1731.1 141.6Z" fill="#1670b0"/><path d="M1771.2 81.5 H1821.2 V85.9 H1799.7 V97.9 H1821.2 V103 H1799.7 V116.9 H1821.2 V122 H1771.2Z" fill="#1670b0"/><rect x="1830" y="72.6" width="29.2" height="49.4" fill="#1670b0"/><rect x="1870.5" y="81.5" width="29.1" height="40.5" fill="#1670b0"/></svg>
<div class="t tbi" style="left:1442.84px;top:153.1px;font-size:16px;transform:scaleX(1.3288);color:#000;">Calibration File:</div>
<div class="t tbi" style="left:1679.4px;top:153.1px;font-size:16px;transform:scaleX(1.3347);color:#000;">Weighting Function:</div>
<div class="t tr" style="left:1758.54px;top:179.78px;font-size:16.5px;transform:scaleX(1.4075);color:#000;">None</div>
<div class="b" style="left:1443.9px;top:178px;width:227.6px;height:24.5px;background:#fff;border-top:2px solid #a8a49c;border-left:2px solid #a8a49c;border-bottom:1px solid #f4f2ee;border-right:1px solid #f4f2ee;"></div>
<div class="b" style="left:1641.7px;top:179px;width:29.8px;height:23.5px;background:linear-gradient(180deg,#eae8e4,#cfcbc4);border-left:1px solid #b4b0a8;border-right:1px solid #8c8880;border-bottom:1px solid #8c8880;"></div>
<svg style="left:1646.6px;top:184.25px" width="20" height="12" viewBox="0 0 20 12"><path d="M2 2.5 L18 2.5 L10 10Z" fill="#141414"/></svg>
<div class="t tr" style="left:1445.11px;top:181.93px;font-size:16.2px;transform:scaleX(1.1150);color:#000;">#1  Radiance demo</div>
<div class="t tbi" style="left:1444.78px;top:218.9px;font-size:16px;transform:scaleX(1.3243);color:#000;">Measurement Mode:</div>
<div class="b" style="left:1445.2px;top:243px;width:227.8px;height:24.5px;background:#dcd8d2;border-top:2px solid #a8a49c;border-left:2px solid #a8a49c;border-bottom:1px solid #f4f2ee;border-right:1px solid #f4f2ee;"></div>
<div class="b" style="left:1643px;top:244px;width:30px;height:23.5px;background:linear-gradient(180deg,#eae8e4,#cfcbc4);border-left:1px solid #b4b0a8;border-right:1px solid #8c8880;border-bottom:1px solid #8c8880;"></div>
<svg style="left:1648px;top:249.25px" width="20" height="12" viewBox="0 0 20 12"><path d="M2 2.5 L18 2.5 L10 10Z" fill="#141414"/></svg>
<div class="t tr" style="left:1446.53px;top:247.23px;font-size:16.2px;transform:scaleX(1.1367);color:#000;">Radiance</div>
<div class="t tr" style="left:1446.4px;top:357.98px;font-size:16.5px;transform:scaleX(1.4141);color:#000;">Average</div>
<div class="b" style="left:1536.5px;top:351.5px;width:15.8px;height:26.5px;background:linear-gradient(90deg,#ebe8e3,#c8c4bc);border-right:1px solid #8a867e;border-bottom:1px solid #8a867e;"></div>
<svg style="left:1536.5px;top:351.5px" width="15.8" height="26.5" viewBox="0 0 15.8 26.5"><path d="M2.9 11.25 L7.9 4.25 L12.9 11.25Z M2.9 15.25 L7.9 22.25 L12.9 15.25Z" fill="#2a2a2a"/></svg>
<div class="b" style="left:1554.8px;top:352.8px;width:84.5px;height:24.6px;background:#fff;border-top:2px solid #b4b0a8;border-left:2px solid #b4b0a8;border-right:1px solid #ebe8e2;border-bottom:1px solid #ebe8e2;"></div>
<div class="t tr" style="left:1556.99px;top:356.48px;font-size:16.5px;transform:scaleX(1.3000);color:#000;">1</div>
<div class="b" style="left:1647.8px;top:355.3px;width:25.2px;height:20px;background:#fff;border-top:2px solid #7c7870;border-left:2px solid #7c7870;border-right:1px solid #e8e5de;border-bottom:1px solid #e8e5de;"></div>
<div class="t tr" style="left:1682.58px;top:355.75px;font-size:17px;transform:scaleX(1.3375);color:#000;">Sync</div>
<div class="b" style="left:1784px;top:349.6px;width:93.4px;height:24.7px;background:#d8d5cf;border-top:2px solid #b4b0a8;border-left:2px solid #b4b0a8;border-right:1px solid #ebe8e2;border-bottom:1px solid #ebe8e2;"></div>
<div class="t tr" style="left:1786.86px;top:354.48px;font-size:16.5px;transform:scaleX(1.4075);color:#a8a59e;">1000,00</div>
<div class="t tr" style="left:1879.34px;top:358.68px;font-size:16.5px;transform:scaleX(1.4067);color:#a8a59e;">Hz</div>
<div class="b" style="left:1445.4px;top:390px;width:190.4px;height:86px;background:#1af51a;border:1.5px solid #000;box-shadow:inset -2px -2px 2px rgba(0,90,0,.45), inset 2px 2px 2px rgba(180,255,180,.4);"></div>
<div class="t tb" style="left:1464.8px;top:421.15px;font-size:21px;transform:scaleX(1.0996);color:#061406;-webkit-text-stroke:0.45px #061406;">Measurement</div>
<div class="b" style="left:1647.8px;top:388.5px;width:25.2px;height:20px;background:#fff;border-top:2px solid #7c7870;border-left:2px solid #7c7870;border-right:1px solid #e8e5de;border-bottom:1px solid #e8e5de;"></div>
<div class="t tr" style="left:1682.44px;top:389.25px;font-size:17px;transform:scaleX(1.3651);color:#000;">Cont.</div>
<div class="b" style="left:1765.8px;top:386.3px;width:16.7px;height:25.3px;background:linear-gradient(90deg,#ebe8e3,#c8c4bc);border-right:1px solid #8a867e;border-bottom:1px solid #8a867e;"></div>
<svg style="left:1765.8px;top:386.3px" width="16.7" height="25.3" viewBox="0 0 16.7 25.3"><path d="M3.35 10.65 L8.35 3.65 L13.35 10.65Z M3.35 14.65 L8.35 21.65 L13.35 14.65Z" fill="#2a2a2a"/></svg>
<div class="b" style="left:1784px;top:385.3px;width:92.5px;height:25.3px;background:#d8d5cf;border-top:2px solid #b4b0a8;border-left:2px solid #b4b0a8;border-right:1px solid #ebe8e2;border-bottom:1px solid #ebe8e2;"></div>
<div class="t tr" style="left:1788.67px;top:390.48px;font-size:16.5px;transform:scaleX(1.2500);color:#a8a59e;">0</div>
<div class="t tr" style="left:1882.18px;top:391.98px;font-size:16.5px;transform:scaleX(1.2500);color:#a8a59e;">s</div>
<div class="b" style="left:1647.8px;top:421.7px;width:25.2px;height:20px;background:#fff;border-top:2px solid #7c7870;border-left:2px solid #7c7870;border-right:1px solid #e8e5de;border-bottom:1px solid #e8e5de;"></div>
<div class="t tr" style="left:1681.74px;top:422.15px;font-size:17px;transform:scaleX(1.3640);color:#000;">Hold Integration Time</div>
<div class="b" style="left:1647.8px;top:455px;width:25.2px;height:20px;background:#fff;border-top:2px solid #7c7870;border-left:2px solid #7c7870;border-right:1px solid #e8e5de;border-bottom:1px solid #e8e5de;"></div>
<div class="t tr" style="left:1680.97px;top:453.75px;font-size:17px;transform:scaleX(1.3458);color:#000;">Quick mode</div>
<div class="b" style="left:1444.2px;top:500px;width:456px;height:130.4px;background:#fff;border-top:2px solid #8c8880;border-left:2px solid #8c8880;border-right:1px solid #e8e5de;border-bottom:1px solid #e8e5de;"></div>
<div class="b" style="left:1880.3px;top:502px;width:18.3px;height:127px;background:#f2f0ec;"></div>
<div class="b" style="left:1880.3px;top:502.4px;width:18.3px;height:18.3px;background:linear-gradient(135deg,#f8f7f4,#d6d2ca);border-right:1.2px solid #000;border-bottom:1.2px solid #000;"></div>
<svg style="left:1885.45px;top:508.05px" width="8" height="7"><path d="M4 1.5 L6.5 5.5 L1.5 5.5Z" fill="#8a8680"/></svg>
<div class="b" style="left:1880.3px;top:611.5px;width:18.3px;height:17.4px;background:linear-gradient(135deg,#f8f7f4,#d6d2ca);border-right:1.2px solid #000;border-bottom:1.2px solid #000;"></div>
<svg style="left:1885.45px;top:616.7px" width="8" height="7"><path d="M1.5 1.5 L6.5 1.5 L4 5.5Z" fill="#8a8680"/></svg>
<div class="t tb" style="left:1449.17px;top:504.18px;font-size:16.5px;transform:scaleX(1.3424);color:#000;">#1</div>
<div class="b" style="left:1445.7px;top:525px;width:34.5px;height:21px;border:1px solid #8ab4d8;"></div>
<div class="t tb" style="left:1449.14px;top:526.27px;font-size:16.5px;transform:scaleX(1.4649);color:#000;">#2</div>
<div class="b" style="left:1445.4px;top:632.7px;width:286.6px;height:35.7px;background:linear-gradient(180deg,#ebe9e5,#d9d6d0);border:1.5px solid #000;border-right-width:2px;border-bottom-width:2px;"></div>
<div class="t tr" style="left:1479.74px;top:641.25px;font-size:17px;transform:scaleX(1.3517);color:#000;">Transfer data to table</div>
<div class="b" style="left:1812.3px;top:642px;width:26.2px;height:20px;background:#fff;border-top:2px solid #7c7870;border-left:2px solid #7c7870;border-right:1px solid #e8e5de;border-bottom:1px solid #e8e5de;"></div>
<div class="t tr" style="left:1844.87px;top:642.25px;font-size:17px;transform:scaleX(1.3626);color:#000;">auto</div>
<div class="b" style="left:1439.4px;top:676.3px;width:463.2px;height:366.2px;border-top:1px solid #8c8880;border-left:1px solid #8c8880;border-right:1px solid #f6f4f0;border-bottom:1px solid #f6f4f0;"></div>
<div class="b" style="left:1440.4px;top:677.3px;width:461.2px;height:364.2px;border-top:1px solid #f6f4f0;border-left:1px solid #f6f4f0;border-right:1px solid #8c8880;border-bottom:1px solid #8c8880;"></div>
<div class="t tr" style="left:1443.23px;top:696.55px;font-size:17px;transform:scaleX(1.3715);color:#000;">Luminance</div>
<div class="t tr" style="left:1649.38px;top:695.75px;font-size:17px;transform:scaleX(1.1897);color:#000;">L</div>
<div class="t tr" style="left:1663.6px;top:704.58px;font-size:12.5px;transform:scaleX(1.5673);color:#000;">v</div>
<div class="b" style="left:1702.7px;top:692.1px;width:111.8px;height:25.1px;background:#fff;border-top:2px solid #b4b0a8;border-left:2px solid #b4b0a8;border-right:1px solid #ebe8e2;border-bottom:1px solid #ebe8e2;"></div>
<div class="t tr" style="left:1736.15px;top:695.05px;font-size:17px;transform:scaleX(1.3725);color:#000;">18,6</div>
<div class="t tsbi" style="left:1825.62px;top:687.52px;font-size:16px;transform:scaleX(1.5625);color:#000;">cd</div>
<div class="b" style="left:1825px;top:702.3px;width:24.7px;height:1.1px;background:#111;"></div>
<div class="t tsbi" style="left:1824.11px;top:705.22px;font-size:16px;transform:scaleX(1.5349);color:#000;">m²</div>
<div class="t tr" style="left:1443.24px;top:745.25px;font-size:17px;transform:scaleX(1.3702);color:#000;">Radiance</div>
<div class="t tr" style="left:1444.01px;top:765.12px;font-size:13.5px;transform:scaleX(1.3456);color:#000;">(300-1000nm)</div>
<div class="t tr" style="left:1649.38px;top:749.05px;font-size:17px;transform:scaleX(1.1897);color:#000;">L</div>
<div class="t tr" style="left:1663.97px;top:756.88px;font-size:12.5px;transform:scaleX(1.4638);color:#000;">e</div>
<div class="b" style="left:1702.7px;top:744.9px;width:111.8px;height:25.1px;background:#fff;border-top:2px solid #b4b0a8;border-left:2px solid #b4b0a8;border-right:1px solid #ebe8e2;border-bottom:1px solid #ebe8e2;"></div>
<div class="t tr" style="left:1728.04px;top:748.05px;font-size:17px;transform:scaleX(1.4132);color:#000;">0,082</div>
<div class="t tsbi" style="left:1835.41px;top:741.75px;font-size:15px;transform:scaleX(1.5152);color:#000;">W</div>
<div class="b" style="left:1824.6px;top:757px;width:44px;height:1.1px;background:#111;"></div>
<div class="t tsbi" style="left:1824.72px;top:761.15px;font-size:15px;transform:scaleX(1.6125);color:#000;">sr m²</div>
<div class="t tr" style="left:1443.93px;top:802.55px;font-size:17px;transform:scaleX(1.3731);color:#000;">Corr. Color Temp</div>
<div class="t tr" style="left:1642.49px;top:802.55px;font-size:17px;transform:scaleX(1.3039);color:#000;">CCT</div>
<div class="b" style="left:1702.7px;top:798.2px;width:111.8px;height:23.8px;background:#fff;border-top:2px solid #b4b0a8;border-left:2px solid #b4b0a8;border-right:1px solid #ebe8e2;border-bottom:1px solid #ebe8e2;"></div>
<div class="t tr" style="left:1731.62px;top:800.55px;font-size:17px;transform:scaleX(1.3831);color:#000;">7636</div>
<div class="t tsbi" style="left:1825.9px;top:804.55px;font-size:15px;transform:scaleX(1.2694);color:#000;">K</div>
<div class="t tr" style="left:1443.97px;top:856.55px;font-size:17px;transform:scaleX(1.3293);color:#000;">Chromaticity</div>
<div class="t tr" style="left:1600.66px;top:854.05px;font-size:17px;transform:scaleX(1.3848);color:#000;">x</div>
<div class="b" style="left:1634.8px;top:850.4px;width:94.2px;height:25.2px;background:#fff;border-top:2px solid #b4b0a8;border-left:2px solid #b4b0a8;border-right:1px solid #ebe8e2;border-bottom:1px solid #ebe8e2;"></div>
<div class="t tr" style="left:1645.05px;top:853.55px;font-size:17px;transform:scaleX(1.3916);color:#000;">0,3106</div>
<div class="t tr" style="left:1753.88px;top:854.05px;font-size:17px;transform:scaleX(1.3666);color:#000;">y</div>
<div class="b" style="left:1788px;top:850.4px;width:94.4px;height:25.2px;background:#fff;border-top:2px solid #b4b0a8;border-left:2px solid #b4b0a8;border-right:1px solid #ebe8e2;border-bottom:1px solid #ebe8e2;"></div>
<div class="t tr" style="left:1798.46px;top:853.55px;font-size:17px;transform:scaleX(1.3873);color:#000;">0,2670</div>
<div class="t tr" style="left:1443.36px;top:908.75px;font-size:17px;transform:scaleX(1.3378);color:#000;">Chromaticity</div>
<div class="t tr" style="left:1599.1px;top:908.75px;font-size:17px;transform:scaleX(1.7180);color:#000;">u'</div>
<div class="b" style="left:1635px;top:904.9px;width:94.4px;height:24.3px;background:#fff;border-top:2px solid #b4b0a8;border-left:2px solid #b4b0a8;border-right:1px solid #ebe8e2;border-bottom:1px solid #ebe8e2;"></div>
<div class="t tr" style="left:1646.07px;top:907.05px;font-size:17px;transform:scaleX(1.3620);color:#000;">0,2226</div>
<div class="t tr" style="left:1754.08px;top:908.75px;font-size:17px;transform:scaleX(1.4636);color:#000;">v'</div>
<div class="b" style="left:1787px;top:904.9px;width:95.5px;height:24.3px;background:#fff;border-top:2px solid #b4b0a8;border-left:2px solid #b4b0a8;border-right:1px solid #ebe8e2;border-bottom:1px solid #ebe8e2;"></div>
<div class="t tr" style="left:1798.58px;top:907.05px;font-size:17px;transform:scaleX(1.3575);color:#000;">0,4304</div>
<div class="t tr" style="left:1451.27px;top:965.55px;font-size:17px;transform:scaleX(1.4896);color:#000;">X</div>
<div class="b" style="left:1485.9px;top:958px;width:103.4px;height:25.4px;background:#fff;border-top:2px solid #b4b0a8;border-left:2px solid #b4b0a8;border-right:1px solid #ebe8e2;border-bottom:1px solid #ebe8e2;"></div>
<div class="t tr" style="left:1513.49px;top:960.35px;font-size:17px;transform:scaleX(1.4270);color:#000;">21,6</div>
<div class="t tr" style="left:1596.44px;top:965.05px;font-size:17px;transform:scaleX(1.3283);color:#000;">Y</div>
<div class="b" style="left:1627.3px;top:958px;width:102.1px;height:25.4px;background:#fff;border-top:2px solid #b4b0a8;border-left:2px solid #b4b0a8;border-right:1px solid #ebe8e2;border-bottom:1px solid #ebe8e2;"></div>
<div class="t tr" style="left:1655.63px;top:960.35px;font-size:17px;transform:scaleX(1.3886);color:#000;">18,6</div>
<div class="t tr" style="left:1741.26px;top:965.55px;font-size:17px;transform:scaleX(1.4439);color:#000;">Z</div>
<div class="b" style="left:1771.3px;top:958px;width:103.4px;height:25.4px;background:#fff;border-top:2px solid #b4b0a8;border-left:2px solid #b4b0a8;border-right:1px solid #ebe8e2;border-bottom:1px solid #ebe8e2;"></div>
<div class="t tr" style="left:1798.8px;top:960.35px;font-size:17px;transform:scaleX(1.4067);color:#000;">29,4</div>
<div class="b" style="left:1749px;top:1052.3px;width:152.6px;height:46.3px;background:linear-gradient(90deg,#e8e6e2,#dedbd6 85%,#b0aca4);border:1.5px solid #000;border-right-width:2px;border-bottom-width:2px;"></div>
<div class="t tb" style="left:1792.38px;top:1064.2px;font-size:22px;transform:scaleX(1.2723);color:#000;-webkit-text-stroke:0.4px #000;">QUIT</div>
</body></html>
